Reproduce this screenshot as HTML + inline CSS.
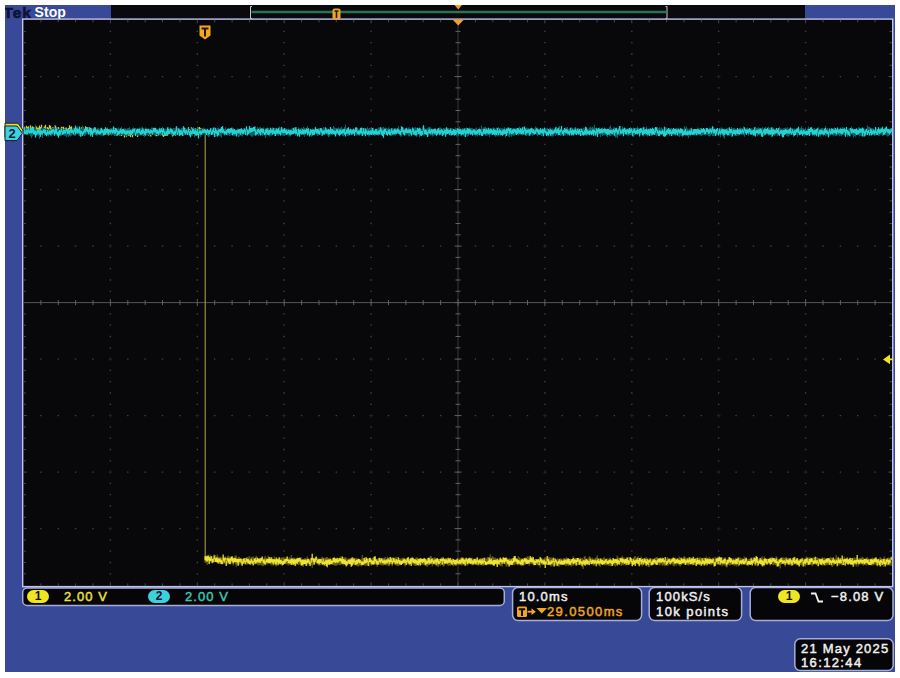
<!DOCTYPE html>
<html><head><meta charset="utf-8"><title>Tek Stop</title>
<style>
html,body{margin:0;padding:0;background:#fff;}
body{width:900px;height:678px;position:relative;overflow:hidden;font-family:"Liberation Sans",sans-serif;font-weight:bold;}
#scr{position:absolute;left:5px;top:5px;width:890px;height:667px;background:#384a97;}
.abs{position:absolute;}
#topbar{left:111px;top:5px;width:694px;height:14px;background:#0a0a0e;}
#plot{left:22px;top:19px;width:870px;height:567px;background:#09090c;border:1px solid #b6b9e2;box-sizing:content-box;}
.box{position:absolute;background:#060608;border:1px solid #aab0de;border-radius:6px;box-sizing:border-box;}
.t{font-weight:normal;-webkit-text-stroke:0.45px currentColor;position:absolute;white-space:nowrap;font-size:13px;line-height:13px;letter-spacing:1px;color:#f0f0f0;}
.badge{position:absolute;border-radius:7px;height:13px;width:22px;font-size:12px;line-height:13px;text-align:center;color:#101018;letter-spacing:0;}
svg{position:absolute;left:0;top:0;}
</style></head><body>
<div id="scr"></div>
<div class="abs" id="topbar"></div>

<div class="abs" style="left:5px;top:5px;width:40px;height:15px;overflow:hidden;"><div class="t" style="left:-1.5px;top:-0.5px;font-size:15.5px;line-height:15.5px;letter-spacing:0.9px;color:#0e1236;font-weight:bold;-webkit-text-stroke:0.6px #0e1236;">Tek</div></div>
<div class="t" style="left:34.5px;top:4.5px;font-size:14px;line-height:14px;letter-spacing:0.1px;color:#fff;font-weight:bold;-webkit-text-stroke:0;">Stop</div>

<!-- bottom readout boxes -->
<svg width="900" height="678" viewBox="0 0 900 678">
<rect x="22.7" y="588.0" width="481.6" height="17.4" rx="4.5" fill="#060608" stroke="#a6add8" stroke-width="1.5"/>
<rect x="512.6" y="587.4" width="129.0" height="33.2" rx="5.5" fill="#060608" stroke="#a6add8" stroke-width="1.5"/>
<rect x="649.2" y="587.4" width="92.4" height="33.2" rx="5.5" fill="#060608" stroke="#a6add8" stroke-width="1.5"/>
<rect x="750.2" y="587.4" width="142.8" height="33.2" rx="5.5" fill="#060608" stroke="#a6add8" stroke-width="1.5"/>
<rect x="794.8" y="638.8" width="98.4" height="31.8" rx="5.5" fill="#060608" stroke="#a6add8" stroke-width="1.5"/>
</svg>
<div class="badge" style="left:27px;top:590px;background:#f0e524;">1</div>
<div class="t" style="left:64px;top:590px;color:#ebe23c;letter-spacing:1.08px;">2.00 V</div>
<div class="badge" style="left:148px;top:590px;background:#3fd0de;">2</div>
<div class="t" style="left:185px;top:590px;color:#3ec4b4;letter-spacing:1.08px;">2.00 V</div>

<div class="t" style="left:519px;top:590px;letter-spacing:1.15px;">10.0ms</div>
<div class="t" style="left:547px;top:605px;color:#f0a628;letter-spacing:1.38px;">29.0500ms</div>

<div class="t" style="left:656px;top:590px;letter-spacing:1.15px;">100kS/s</div>
<div class="t" style="left:656px;top:605px;letter-spacing:1.42px;">10k points</div>

<div class="badge" style="left:778px;top:590px;background:#f0e524;">1</div>
<div class="t" style="left:831px;top:590px;letter-spacing:1.17px;">−8.08 V</div>

<div class="t" style="left:801px;top:642px;letter-spacing:1.2px;">21 May 2025</div>
<div class="t" style="left:801px;top:656px;letter-spacing:1.36px;">16:12:44</div>

<svg width="900" height="678" viewBox="0 0 900 678">
<rect x="22.700" y="19.100" width="870" height="567.500" fill="#08080b" stroke="#c0c4ee" stroke-width="1.400"/>
<path d="M40.2 76.6h1.4M57.6 76.6h1.4M74.9 76.6h1.4M92.3 76.6h1.4M109.7 76.6h1.4M127.1 76.6h1.4M144.5 76.6h1.4M161.8 76.6h1.4M179.2 76.6h1.4M196.6 76.6h1.4M214 76.6h1.4M231.4 76.6h1.4M248.7 76.6h1.4M266.1 76.6h1.4M283.5 76.6h1.4M300.9 76.6h1.4M318.3 76.6h1.4M335.6 76.6h1.4M353 76.6h1.4M370.4 76.6h1.4M387.8 76.6h1.4M405.2 76.6h1.4M422.5 76.6h1.4M439.9 76.6h1.4M457.3 76.6h1.4M474.7 76.6h1.4M492.1 76.6h1.4M509.4 76.6h1.4M526.8 76.6h1.4M544.2 76.6h1.4M561.6 76.6h1.4M579 76.6h1.4M596.3 76.6h1.4M613.7 76.6h1.4M631.1 76.6h1.4M648.5 76.6h1.4M665.9 76.6h1.4M683.2 76.6h1.4M700.6 76.6h1.4M718 76.6h1.4M735.4 76.6h1.4M752.8 76.6h1.4M770.1 76.6h1.4M787.5 76.6h1.4M804.9 76.6h1.4M822.3 76.6h1.4M839.7 76.6h1.4M857 76.6h1.4M874.4 76.6h1.4M40.2 133.1h1.4M57.6 133.1h1.4M74.9 133.1h1.4M92.3 133.1h1.4M109.7 133.1h1.4M127.1 133.1h1.4M144.5 133.1h1.4M161.8 133.1h1.4M179.2 133.1h1.4M196.6 133.1h1.4M214 133.1h1.4M231.4 133.1h1.4M248.7 133.1h1.4M266.1 133.1h1.4M283.5 133.1h1.4M300.9 133.1h1.4M318.3 133.1h1.4M335.6 133.1h1.4M353 133.1h1.4M370.4 133.1h1.4M387.8 133.1h1.4M405.2 133.1h1.4M422.5 133.1h1.4M439.9 133.1h1.4M457.3 133.1h1.4M474.7 133.1h1.4M492.1 133.1h1.4M509.4 133.1h1.4M526.8 133.1h1.4M544.2 133.1h1.4M561.6 133.1h1.4M579 133.1h1.4M596.3 133.1h1.4M613.7 133.1h1.4M631.1 133.1h1.4M648.5 133.1h1.4M665.9 133.1h1.4M683.2 133.1h1.4M700.6 133.1h1.4M718 133.1h1.4M735.4 133.1h1.4M752.8 133.1h1.4M770.1 133.1h1.4M787.5 133.1h1.4M804.9 133.1h1.4M822.3 133.1h1.4M839.7 133.1h1.4M857 133.1h1.4M874.4 133.1h1.4M40.2 189.6h1.4M57.6 189.6h1.4M74.9 189.6h1.4M92.3 189.6h1.4M109.7 189.6h1.4M127.1 189.6h1.4M144.5 189.6h1.4M161.8 189.6h1.4M179.2 189.6h1.4M196.6 189.6h1.4M214 189.6h1.4M231.4 189.6h1.4M248.7 189.6h1.4M266.1 189.6h1.4M283.5 189.6h1.4M300.9 189.6h1.4M318.3 189.6h1.4M335.6 189.6h1.4M353 189.6h1.4M370.4 189.6h1.4M387.8 189.6h1.4M405.2 189.6h1.4M422.5 189.6h1.4M439.9 189.6h1.4M457.3 189.6h1.4M474.7 189.6h1.4M492.1 189.6h1.4M509.4 189.6h1.4M526.8 189.6h1.4M544.2 189.6h1.4M561.6 189.6h1.4M579 189.6h1.4M596.3 189.6h1.4M613.7 189.6h1.4M631.1 189.6h1.4M648.5 189.6h1.4M665.9 189.6h1.4M683.2 189.6h1.4M700.6 189.6h1.4M718 189.6h1.4M735.4 189.6h1.4M752.8 189.6h1.4M770.1 189.6h1.4M787.5 189.6h1.4M804.9 189.6h1.4M822.3 189.6h1.4M839.7 189.6h1.4M857 189.6h1.4M874.4 189.6h1.4M40.2 246.1h1.4M57.6 246.1h1.4M74.9 246.1h1.4M92.3 246.1h1.4M109.7 246.1h1.4M127.1 246.1h1.4M144.5 246.1h1.4M161.8 246.1h1.4M179.2 246.1h1.4M196.6 246.1h1.4M214 246.1h1.4M231.4 246.1h1.4M248.7 246.1h1.4M266.1 246.1h1.4M283.5 246.1h1.4M300.9 246.1h1.4M318.3 246.1h1.4M335.6 246.1h1.4M353 246.1h1.4M370.4 246.1h1.4M387.8 246.1h1.4M405.2 246.1h1.4M422.5 246.1h1.4M439.9 246.1h1.4M457.3 246.1h1.4M474.7 246.1h1.4M492.1 246.1h1.4M509.4 246.1h1.4M526.8 246.1h1.4M544.2 246.1h1.4M561.6 246.1h1.4M579 246.1h1.4M596.3 246.1h1.4M613.7 246.1h1.4M631.1 246.1h1.4M648.5 246.1h1.4M665.9 246.1h1.4M683.2 246.1h1.4M700.6 246.1h1.4M718 246.1h1.4M735.4 246.1h1.4M752.8 246.1h1.4M770.1 246.1h1.4M787.5 246.1h1.4M804.9 246.1h1.4M822.3 246.1h1.4M839.7 246.1h1.4M857 246.1h1.4M874.4 246.1h1.4M40.2 359.1h1.4M57.6 359.1h1.4M74.9 359.1h1.4M92.3 359.1h1.4M109.7 359.1h1.4M127.1 359.1h1.4M144.5 359.1h1.4M161.8 359.1h1.4M179.2 359.1h1.4M196.6 359.1h1.4M214 359.1h1.4M231.4 359.1h1.4M248.7 359.1h1.4M266.1 359.1h1.4M283.5 359.1h1.4M300.9 359.1h1.4M318.3 359.1h1.4M335.6 359.1h1.4M353 359.1h1.4M370.4 359.1h1.4M387.8 359.1h1.4M405.2 359.1h1.4M422.5 359.1h1.4M439.9 359.1h1.4M457.3 359.1h1.4M474.7 359.1h1.4M492.1 359.1h1.4M509.4 359.1h1.4M526.8 359.1h1.4M544.2 359.1h1.4M561.6 359.1h1.4M579 359.1h1.4M596.3 359.1h1.4M613.7 359.1h1.4M631.1 359.1h1.4M648.5 359.1h1.4M665.9 359.1h1.4M683.2 359.1h1.4M700.6 359.1h1.4M718 359.1h1.4M735.4 359.1h1.4M752.8 359.1h1.4M770.1 359.1h1.4M787.5 359.1h1.4M804.9 359.1h1.4M822.3 359.1h1.4M839.7 359.1h1.4M857 359.1h1.4M874.4 359.1h1.4M40.2 415.6h1.4M57.6 415.6h1.4M74.9 415.6h1.4M92.3 415.6h1.4M109.7 415.6h1.4M127.1 415.6h1.4M144.5 415.6h1.4M161.8 415.6h1.4M179.2 415.6h1.4M196.6 415.6h1.4M214 415.6h1.4M231.4 415.6h1.4M248.7 415.6h1.4M266.1 415.6h1.4M283.5 415.6h1.4M300.9 415.6h1.4M318.3 415.6h1.4M335.6 415.6h1.4M353 415.6h1.4M370.4 415.6h1.4M387.8 415.6h1.4M405.2 415.6h1.4M422.5 415.6h1.4M439.9 415.6h1.4M457.3 415.6h1.4M474.7 415.6h1.4M492.1 415.6h1.4M509.4 415.6h1.4M526.8 415.6h1.4M544.2 415.6h1.4M561.6 415.6h1.4M579 415.6h1.4M596.3 415.6h1.4M613.7 415.6h1.4M631.1 415.6h1.4M648.5 415.6h1.4M665.9 415.6h1.4M683.2 415.6h1.4M700.6 415.6h1.4M718 415.6h1.4M735.4 415.6h1.4M752.8 415.6h1.4M770.1 415.6h1.4M787.5 415.6h1.4M804.9 415.6h1.4M822.3 415.6h1.4M839.7 415.6h1.4M857 415.6h1.4M874.4 415.6h1.4M40.2 472.1h1.4M57.6 472.1h1.4M74.9 472.1h1.4M92.3 472.1h1.4M109.7 472.1h1.4M127.1 472.1h1.4M144.5 472.1h1.4M161.8 472.1h1.4M179.2 472.1h1.4M196.6 472.1h1.4M214 472.1h1.4M231.4 472.1h1.4M248.7 472.1h1.4M266.1 472.1h1.4M283.5 472.1h1.4M300.9 472.1h1.4M318.3 472.1h1.4M335.6 472.1h1.4M353 472.1h1.4M370.4 472.1h1.4M387.8 472.1h1.4M405.2 472.1h1.4M422.5 472.1h1.4M439.9 472.1h1.4M457.3 472.1h1.4M474.7 472.1h1.4M492.1 472.1h1.4M509.4 472.1h1.4M526.8 472.1h1.4M544.2 472.1h1.4M561.6 472.1h1.4M579 472.1h1.4M596.3 472.1h1.4M613.7 472.1h1.4M631.1 472.1h1.4M648.5 472.1h1.4M665.9 472.1h1.4M683.2 472.1h1.4M700.6 472.1h1.4M718 472.1h1.4M735.4 472.1h1.4M752.8 472.1h1.4M770.1 472.1h1.4M787.5 472.1h1.4M804.9 472.1h1.4M822.3 472.1h1.4M839.7 472.1h1.4M857 472.1h1.4M874.4 472.1h1.4M40.2 528.6h1.4M57.6 528.6h1.4M74.9 528.6h1.4M92.3 528.6h1.4M109.7 528.6h1.4M127.1 528.6h1.4M144.5 528.6h1.4M161.8 528.6h1.4M179.2 528.6h1.4M196.6 528.6h1.4M214 528.6h1.4M231.4 528.6h1.4M248.7 528.6h1.4M266.1 528.6h1.4M283.5 528.6h1.4M300.9 528.6h1.4M318.3 528.6h1.4M335.6 528.6h1.4M353 528.6h1.4M370.4 528.6h1.4M387.8 528.6h1.4M405.2 528.6h1.4M422.5 528.6h1.4M439.9 528.6h1.4M457.3 528.6h1.4M474.7 528.6h1.4M492.1 528.6h1.4M509.4 528.6h1.4M526.8 528.6h1.4M544.2 528.6h1.4M561.6 528.6h1.4M579 528.6h1.4M596.3 528.6h1.4M613.7 528.6h1.4M631.1 528.6h1.4M648.5 528.6h1.4M665.9 528.6h1.4M683.2 528.6h1.4M700.6 528.6h1.4M718 528.6h1.4M735.4 528.6h1.4M752.8 528.6h1.4M770.1 528.6h1.4M787.5 528.6h1.4M804.9 528.6h1.4M822.3 528.6h1.4M839.7 528.6h1.4M857 528.6h1.4M874.4 528.6h1.4M109.7 31.4h1.4M109.7 42.7h1.4M109.7 54h1.4M109.7 65.3h1.4M109.7 76.6h1.4M109.7 87.9h1.4M109.7 99.2h1.4M109.7 110.5h1.4M109.7 121.8h1.4M109.7 133.1h1.4M109.7 144.4h1.4M109.7 155.7h1.4M109.7 167h1.4M109.7 178.3h1.4M109.7 189.6h1.4M109.7 200.9h1.4M109.7 212.2h1.4M109.7 223.5h1.4M109.7 234.8h1.4M109.7 246.1h1.4M109.7 257.4h1.4M109.7 268.7h1.4M109.7 280h1.4M109.7 291.3h1.4M109.7 302.6h1.4M109.7 313.9h1.4M109.7 325.2h1.4M109.7 336.5h1.4M109.7 347.8h1.4M109.7 359.1h1.4M109.7 370.4h1.4M109.7 381.7h1.4M109.7 393h1.4M109.7 404.3h1.4M109.7 415.6h1.4M109.7 426.9h1.4M109.7 438.2h1.4M109.7 449.5h1.4M109.7 460.8h1.4M109.7 472.1h1.4M109.7 483.4h1.4M109.7 494.7h1.4M109.7 506h1.4M109.7 517.3h1.4M109.7 528.6h1.4M109.7 539.9h1.4M109.7 551.2h1.4M109.7 562.5h1.4M109.7 573.8h1.4M196.6 31.4h1.4M196.6 42.7h1.4M196.6 54h1.4M196.6 65.3h1.4M196.6 76.6h1.4M196.6 87.9h1.4M196.6 99.2h1.4M196.6 110.5h1.4M196.6 121.8h1.4M196.6 133.1h1.4M196.6 144.4h1.4M196.6 155.7h1.4M196.6 167h1.4M196.6 178.3h1.4M196.6 189.6h1.4M196.6 200.9h1.4M196.6 212.2h1.4M196.6 223.5h1.4M196.6 234.8h1.4M196.6 246.1h1.4M196.6 257.4h1.4M196.6 268.7h1.4M196.6 280h1.4M196.6 291.3h1.4M196.6 302.6h1.4M196.6 313.9h1.4M196.6 325.2h1.4M196.6 336.5h1.4M196.6 347.8h1.4M196.6 359.1h1.4M196.6 370.4h1.4M196.6 381.7h1.4M196.6 393h1.4M196.6 404.3h1.4M196.6 415.6h1.4M196.6 426.9h1.4M196.6 438.2h1.4M196.6 449.5h1.4M196.6 460.8h1.4M196.6 472.1h1.4M196.6 483.4h1.4M196.6 494.7h1.4M196.6 506h1.4M196.6 517.3h1.4M196.6 528.6h1.4M196.6 539.9h1.4M196.6 551.2h1.4M196.6 562.5h1.4M196.6 573.8h1.4M283.5 31.4h1.4M283.5 42.7h1.4M283.5 54h1.4M283.5 65.3h1.4M283.5 76.6h1.4M283.5 87.9h1.4M283.5 99.2h1.4M283.5 110.5h1.4M283.5 121.8h1.4M283.5 133.1h1.4M283.5 144.4h1.4M283.5 155.7h1.4M283.5 167h1.4M283.5 178.3h1.4M283.5 189.6h1.4M283.5 200.9h1.4M283.5 212.2h1.4M283.5 223.5h1.4M283.5 234.8h1.4M283.5 246.1h1.4M283.5 257.4h1.4M283.5 268.7h1.4M283.5 280h1.4M283.5 291.3h1.4M283.5 302.6h1.4M283.5 313.9h1.4M283.5 325.2h1.4M283.5 336.5h1.4M283.5 347.8h1.4M283.5 359.1h1.4M283.5 370.4h1.4M283.5 381.7h1.4M283.5 393h1.4M283.5 404.3h1.4M283.5 415.6h1.4M283.5 426.9h1.4M283.5 438.2h1.4M283.5 449.5h1.4M283.5 460.8h1.4M283.5 472.1h1.4M283.5 483.4h1.4M283.5 494.7h1.4M283.5 506h1.4M283.5 517.3h1.4M283.5 528.6h1.4M283.5 539.9h1.4M283.5 551.2h1.4M283.5 562.5h1.4M283.5 573.8h1.4M370.4 31.4h1.4M370.4 42.7h1.4M370.4 54h1.4M370.4 65.3h1.4M370.4 76.6h1.4M370.4 87.9h1.4M370.4 99.2h1.4M370.4 110.5h1.4M370.4 121.8h1.4M370.4 133.1h1.4M370.4 144.4h1.4M370.4 155.7h1.4M370.4 167h1.4M370.4 178.3h1.4M370.4 189.6h1.4M370.4 200.9h1.4M370.4 212.2h1.4M370.4 223.5h1.4M370.4 234.8h1.4M370.4 246.1h1.4M370.4 257.4h1.4M370.4 268.7h1.4M370.4 280h1.4M370.4 291.3h1.4M370.4 302.6h1.4M370.4 313.9h1.4M370.4 325.2h1.4M370.4 336.5h1.4M370.4 347.8h1.4M370.4 359.1h1.4M370.4 370.4h1.4M370.4 381.7h1.4M370.4 393h1.4M370.4 404.3h1.4M370.4 415.6h1.4M370.4 426.9h1.4M370.4 438.2h1.4M370.4 449.5h1.4M370.4 460.8h1.4M370.4 472.1h1.4M370.4 483.4h1.4M370.4 494.7h1.4M370.4 506h1.4M370.4 517.3h1.4M370.4 528.6h1.4M370.4 539.9h1.4M370.4 551.2h1.4M370.4 562.5h1.4M370.4 573.8h1.4M544.2 31.4h1.4M544.2 42.7h1.4M544.2 54h1.4M544.2 65.3h1.4M544.2 76.6h1.4M544.2 87.9h1.4M544.2 99.2h1.4M544.2 110.5h1.4M544.2 121.8h1.4M544.2 133.1h1.4M544.2 144.4h1.4M544.2 155.7h1.4M544.2 167h1.4M544.2 178.3h1.4M544.2 189.6h1.4M544.2 200.9h1.4M544.2 212.2h1.4M544.2 223.5h1.4M544.2 234.8h1.4M544.2 246.1h1.4M544.2 257.4h1.4M544.2 268.7h1.4M544.2 280h1.4M544.2 291.3h1.4M544.2 302.6h1.4M544.2 313.9h1.4M544.2 325.2h1.4M544.2 336.5h1.4M544.2 347.8h1.4M544.2 359.1h1.4M544.2 370.4h1.4M544.2 381.7h1.4M544.2 393h1.4M544.2 404.3h1.4M544.2 415.6h1.4M544.2 426.9h1.4M544.2 438.2h1.4M544.2 449.5h1.4M544.2 460.8h1.4M544.2 472.1h1.4M544.2 483.4h1.4M544.2 494.7h1.4M544.2 506h1.4M544.2 517.3h1.4M544.2 528.6h1.4M544.2 539.9h1.4M544.2 551.2h1.4M544.2 562.5h1.4M544.2 573.8h1.4M631.1 31.4h1.4M631.1 42.7h1.4M631.1 54h1.4M631.1 65.3h1.4M631.1 76.6h1.4M631.1 87.9h1.4M631.1 99.2h1.4M631.1 110.5h1.4M631.1 121.8h1.4M631.1 133.1h1.4M631.1 144.4h1.4M631.1 155.7h1.4M631.1 167h1.4M631.1 178.3h1.4M631.1 189.6h1.4M631.1 200.9h1.4M631.1 212.2h1.4M631.1 223.5h1.4M631.1 234.8h1.4M631.1 246.1h1.4M631.1 257.4h1.4M631.1 268.7h1.4M631.1 280h1.4M631.1 291.3h1.4M631.1 302.6h1.4M631.1 313.9h1.4M631.1 325.2h1.4M631.1 336.5h1.4M631.1 347.8h1.4M631.1 359.1h1.4M631.1 370.4h1.4M631.1 381.7h1.4M631.1 393h1.4M631.1 404.3h1.4M631.1 415.6h1.4M631.1 426.9h1.4M631.1 438.2h1.4M631.1 449.5h1.4M631.1 460.8h1.4M631.1 472.1h1.4M631.1 483.4h1.4M631.1 494.7h1.4M631.1 506h1.4M631.1 517.3h1.4M631.1 528.6h1.4M631.1 539.9h1.4M631.1 551.2h1.4M631.1 562.5h1.4M631.1 573.8h1.4M718 31.4h1.4M718 42.7h1.4M718 54h1.4M718 65.3h1.4M718 76.6h1.4M718 87.9h1.4M718 99.2h1.4M718 110.5h1.4M718 121.8h1.4M718 133.1h1.4M718 144.4h1.4M718 155.7h1.4M718 167h1.4M718 178.3h1.4M718 189.6h1.4M718 200.9h1.4M718 212.2h1.4M718 223.5h1.4M718 234.8h1.4M718 246.1h1.4M718 257.4h1.4M718 268.7h1.4M718 280h1.4M718 291.3h1.4M718 302.6h1.4M718 313.9h1.4M718 325.2h1.4M718 336.5h1.4M718 347.8h1.4M718 359.1h1.4M718 370.4h1.4M718 381.7h1.4M718 393h1.4M718 404.3h1.4M718 415.6h1.4M718 426.9h1.4M718 438.2h1.4M718 449.5h1.4M718 460.8h1.4M718 472.1h1.4M718 483.4h1.4M718 494.7h1.4M718 506h1.4M718 517.3h1.4M718 528.6h1.4M718 539.9h1.4M718 551.2h1.4M718 562.5h1.4M718 573.8h1.4M804.9 31.4h1.4M804.9 42.7h1.4M804.9 54h1.4M804.9 65.3h1.4M804.9 76.6h1.4M804.9 87.9h1.4M804.9 99.2h1.4M804.9 110.5h1.4M804.9 121.8h1.4M804.9 133.1h1.4M804.9 144.4h1.4M804.9 155.7h1.4M804.9 167h1.4M804.9 178.3h1.4M804.9 189.6h1.4M804.9 200.9h1.4M804.9 212.2h1.4M804.9 223.5h1.4M804.9 234.8h1.4M804.9 246.1h1.4M804.9 257.4h1.4M804.9 268.7h1.4M804.9 280h1.4M804.9 291.3h1.4M804.9 302.6h1.4M804.9 313.9h1.4M804.9 325.2h1.4M804.9 336.5h1.4M804.9 347.8h1.4M804.9 359.1h1.4M804.9 370.4h1.4M804.9 381.7h1.4M804.9 393h1.4M804.9 404.3h1.4M804.9 415.6h1.4M804.9 426.9h1.4M804.9 438.2h1.4M804.9 449.5h1.4M804.9 460.8h1.4M804.9 472.1h1.4M804.9 483.4h1.4M804.9 494.7h1.4M804.9 506h1.4M804.9 517.3h1.4M804.9 528.6h1.4M804.9 539.9h1.4M804.9 551.2h1.4M804.9 562.5h1.4M804.9 573.8h1.4" stroke="#42424a" stroke-width="1.3" fill="none"/>
<path d="M108.4 76.6h4M110.4 74.6v4M108.4 133.1h4M110.4 131.1v4M108.4 189.6h4M110.4 187.6v4M108.4 246.1h4M110.4 244.1v4M108.4 359.1h4M110.4 357.1v4M108.4 415.6h4M110.4 413.6v4M108.4 472.1h4M110.4 470.1v4M108.4 528.6h4M110.4 526.6v4M195.3 76.6h4M197.3 74.6v4M195.3 133.1h4M197.3 131.1v4M195.3 189.6h4M197.3 187.6v4M195.3 246.1h4M197.3 244.1v4M195.3 359.1h4M197.3 357.1v4M195.3 415.6h4M197.3 413.6v4M195.3 472.1h4M197.3 470.1v4M195.3 528.6h4M197.3 526.6v4M282.2 76.6h4M284.2 74.6v4M282.2 133.1h4M284.2 131.1v4M282.2 189.6h4M284.2 187.6v4M282.2 246.1h4M284.2 244.1v4M282.2 359.1h4M284.2 357.1v4M282.2 415.6h4M284.2 413.6v4M282.2 472.1h4M284.2 470.1v4M282.2 528.6h4M284.2 526.6v4M369.1 76.6h4M371.1 74.6v4M369.1 133.1h4M371.1 131.1v4M369.1 189.6h4M371.1 187.6v4M369.1 246.1h4M371.1 244.1v4M369.1 359.1h4M371.1 357.1v4M369.1 415.6h4M371.1 413.6v4M369.1 472.1h4M371.1 470.1v4M369.1 528.6h4M371.1 526.6v4M542.9 76.6h4M544.9 74.6v4M542.9 133.1h4M544.9 131.1v4M542.9 189.6h4M544.9 187.6v4M542.9 246.1h4M544.9 244.1v4M542.9 359.1h4M544.9 357.1v4M542.9 415.6h4M544.9 413.6v4M542.9 472.1h4M544.9 470.1v4M542.9 528.6h4M544.9 526.6v4M629.8 76.6h4M631.8 74.6v4M629.8 133.1h4M631.8 131.1v4M629.8 189.6h4M631.8 187.6v4M629.8 246.1h4M631.8 244.1v4M629.8 359.1h4M631.8 357.1v4M629.8 415.6h4M631.8 413.6v4M629.8 472.1h4M631.8 470.1v4M629.8 528.6h4M631.8 526.6v4M716.7 76.6h4M718.7 74.6v4M716.7 133.1h4M718.7 131.1v4M716.7 189.6h4M718.7 187.6v4M716.7 246.1h4M718.7 244.1v4M716.7 359.1h4M718.7 357.1v4M716.7 415.6h4M718.7 413.6v4M716.7 472.1h4M718.7 470.1v4M716.7 528.6h4M718.7 526.6v4M803.6 76.6h4M805.6 74.6v4M803.6 133.1h4M805.6 131.1v4M803.6 189.6h4M805.6 187.6v4M803.6 246.1h4M805.6 244.1v4M803.6 359.1h4M805.6 357.1v4M803.6 415.6h4M805.6 413.6v4M803.6 472.1h4M805.6 470.1v4M803.6 528.6h4M805.6 526.6v4" stroke="#202028" stroke-width="1" fill="none"/>
<path d="M23.4 302.6H892" stroke="#545458" stroke-width="1" fill="none"/>
<path d="M458 19.8V585.9" stroke="#38383e" stroke-width="1" fill="none"/>
<path d="M40.9 300.1v5.0M58.3 300.1v5.0M75.6 300.1v5.0M93 300.1v5.0M110.4 299.1v7.0M127.8 300.1v5.0M145.2 300.1v5.0M162.5 300.1v5.0M179.9 300.1v5.0M197.3 299.1v7.0M214.7 300.1v5.0M232.1 300.1v5.0M249.4 300.1v5.0M266.8 300.1v5.0M284.2 299.1v7.0M301.6 300.1v5.0M319 300.1v5.0M336.3 300.1v5.0M353.7 300.1v5.0M371.1 299.1v7.0M388.5 300.1v5.0M405.9 300.1v5.0M423.2 300.1v5.0M440.6 300.1v5.0M458 299.1v7.0M475.4 300.1v5.0M492.8 300.1v5.0M510.1 300.1v5.0M527.5 300.1v5.0M544.9 299.1v7.0M562.3 300.1v5.0M579.7 300.1v5.0M597 300.1v5.0M614.4 300.1v5.0M631.8 299.1v7.0M649.2 300.1v5.0M666.6 300.1v5.0M683.9 300.1v5.0M701.3 300.1v5.0M718.7 299.1v7.0M736.1 300.1v5.0M753.5 300.1v5.0M770.8 300.1v5.0M788.2 300.1v5.0M805.6 299.1v7.0M823 300.1v5.0M840.4 300.1v5.0M857.7 300.1v5.0M875.1 300.1v5.0M455.5 31.4h5.0M455.5 42.7h5.0M455.5 54h5.0M455.5 65.3h5.0M454.5 76.6h7.0M455.5 87.9h5.0M455.5 99.2h5.0M455.5 110.5h5.0M455.5 121.8h5.0M454.5 133.1h7.0M455.5 144.4h5.0M455.5 155.7h5.0M455.5 167h5.0M455.5 178.3h5.0M454.5 189.6h7.0M455.5 200.9h5.0M455.5 212.2h5.0M455.5 223.5h5.0M455.5 234.8h5.0M454.5 246.1h7.0M455.5 257.4h5.0M455.5 268.7h5.0M455.5 280h5.0M455.5 291.3h5.0M454.5 302.6h7.0M455.5 313.9h5.0M455.5 325.2h5.0M455.5 336.5h5.0M455.5 347.8h5.0M454.5 359.1h7.0M455.5 370.4h5.0M455.5 381.7h5.0M455.5 393h5.0M455.5 404.3h5.0M454.5 415.6h7.0M455.5 426.9h5.0M455.5 438.2h5.0M455.5 449.5h5.0M455.5 460.8h5.0M454.5 472.1h7.0M455.5 483.4h5.0M455.5 494.7h5.0M455.5 506h5.0M455.5 517.3h5.0M454.5 528.6h7.0M455.5 539.9h5.0M455.5 551.2h5.0M455.5 562.5h5.0M455.5 573.8h5.0" stroke="#626266" stroke-width="1" fill="none"/>
<path d="M40.9 19.8v2.5M40.9 585.9v-2.5M58.3 19.8v2.5M58.3 585.9v-2.5M75.6 19.8v2.5M75.6 585.9v-2.5M93 19.8v2.5M93 585.9v-2.5M110.4 19.8v3.5M110.4 585.9v-3.5M127.8 19.8v2.5M127.8 585.9v-2.5M145.2 19.8v2.5M145.2 585.9v-2.5M162.5 19.8v2.5M162.5 585.9v-2.5M179.9 19.8v2.5M179.9 585.9v-2.5M197.3 19.8v3.5M197.3 585.9v-3.5M214.7 19.8v2.5M214.7 585.9v-2.5M232.1 19.8v2.5M232.1 585.9v-2.5M249.4 19.8v2.5M249.4 585.9v-2.5M266.8 19.8v2.5M266.8 585.9v-2.5M284.2 19.8v3.5M284.2 585.9v-3.5M301.6 19.8v2.5M301.6 585.9v-2.5M319 19.8v2.5M319 585.9v-2.5M336.3 19.8v2.5M336.3 585.9v-2.5M353.7 19.8v2.5M353.7 585.9v-2.5M371.1 19.8v3.5M371.1 585.9v-3.5M388.5 19.8v2.5M388.5 585.9v-2.5M405.9 19.8v2.5M405.9 585.9v-2.5M423.2 19.8v2.5M423.2 585.9v-2.5M440.6 19.8v2.5M440.6 585.9v-2.5M458 19.8v3.5M458 585.9v-3.5M475.4 19.8v2.5M475.4 585.9v-2.5M492.8 19.8v2.5M492.8 585.9v-2.5M510.1 19.8v2.5M510.1 585.9v-2.5M527.5 19.8v2.5M527.5 585.9v-2.5M544.9 19.8v3.5M544.9 585.9v-3.5M562.3 19.8v2.5M562.3 585.9v-2.5M579.7 19.8v2.5M579.7 585.9v-2.5M597 19.8v2.5M597 585.9v-2.5M614.4 19.8v2.5M614.4 585.9v-2.5M631.8 19.8v3.5M631.8 585.9v-3.5M649.2 19.8v2.5M649.2 585.9v-2.5M666.6 19.8v2.5M666.6 585.9v-2.5M683.9 19.8v2.5M683.9 585.9v-2.5M701.3 19.8v2.5M701.3 585.9v-2.5M718.7 19.8v3.5M718.7 585.9v-3.5M736.1 19.8v2.5M736.1 585.9v-2.5M753.5 19.8v2.5M753.5 585.9v-2.5M770.8 19.8v2.5M770.8 585.9v-2.5M788.2 19.8v2.5M788.2 585.9v-2.5M805.6 19.8v3.5M805.6 585.9v-3.5M823 19.8v2.5M823 585.9v-2.5M840.4 19.8v2.5M840.4 585.9v-2.5M857.7 19.8v2.5M857.7 585.9v-2.5M875.1 19.8v2.5M875.1 585.9v-2.5M23.4 31.4h2.5M892 31.4h-2.5M23.4 42.7h2.5M892 42.7h-2.5M23.4 54h2.5M892 54h-2.5M23.4 65.3h2.5M892 65.3h-2.5M23.4 76.6h3.5M892 76.6h-3.5M23.4 87.9h2.5M892 87.9h-2.5M23.4 99.2h2.5M892 99.2h-2.5M23.4 110.5h2.5M892 110.5h-2.5M23.4 121.8h2.5M892 121.8h-2.5M23.4 133.1h3.5M892 133.1h-3.5M23.4 144.4h2.5M892 144.4h-2.5M23.4 155.7h2.5M892 155.7h-2.5M23.4 167h2.5M892 167h-2.5M23.4 178.3h2.5M892 178.3h-2.5M23.4 189.6h3.5M892 189.6h-3.5M23.4 200.9h2.5M892 200.9h-2.5M23.4 212.2h2.5M892 212.2h-2.5M23.4 223.5h2.5M892 223.5h-2.5M23.4 234.8h2.5M892 234.8h-2.5M23.4 246.1h3.5M892 246.1h-3.5M23.4 257.4h2.5M892 257.4h-2.5M23.4 268.7h2.5M892 268.7h-2.5M23.4 280h2.5M892 280h-2.5M23.4 291.3h2.5M892 291.3h-2.5M23.4 302.6h3.5M892 302.6h-3.5M23.4 313.9h2.5M892 313.9h-2.5M23.4 325.2h2.5M892 325.2h-2.5M23.4 336.5h2.5M892 336.5h-2.5M23.4 347.8h2.5M892 347.8h-2.5M23.4 359.1h3.5M892 359.1h-3.5M23.4 370.4h2.5M892 370.4h-2.5M23.4 381.7h2.5M892 381.7h-2.5M23.4 393h2.5M892 393h-2.5M23.4 404.3h2.5M892 404.3h-2.5M23.4 415.6h3.5M892 415.6h-3.5M23.4 426.9h2.5M892 426.9h-2.5M23.4 438.2h2.5M892 438.2h-2.5M23.4 449.5h2.5M892 449.5h-2.5M23.4 460.8h2.5M892 460.8h-2.5M23.4 472.1h3.5M892 472.1h-3.5M23.4 483.4h2.5M892 483.4h-2.5M23.4 494.7h2.5M892 494.7h-2.5M23.4 506h2.5M892 506h-2.5M23.4 517.3h2.5M892 517.3h-2.5M23.4 528.6h3.5M892 528.6h-3.5M23.4 539.9h2.5M892 539.9h-2.5M23.4 551.2h2.5M892 551.2h-2.5M23.4 562.5h2.5M892 562.5h-2.5M23.4 573.8h2.5M892 573.8h-2.5" stroke="#484856" stroke-width="1" fill="none"/>
<path d="M24.5 126.8V131.1M25.5 128.2V131.7M26.5 125.7V129.7M27.5 126.9V130.9M28.5 126.3V132.1M29.5 126.9V131.5M30.5 125.3V130.9M31.5 127.6V132.7M32.5 126.3V130.3M33.5 127V131.3M34.5 128.8V132.3M35.5 127.9V132.2M36.5 126.6V133M37.5 127.7V130.9M38.5 127.5V130.4M39.5 125.6V131.4M40.5 127V130M41.5 124.7V130.2M42.5 128.8V132.5M43.5 127.4V131.5M44.5 126.5V129.3M45.5 124.7V129.4M46.5 128.5V131.4M47.5 127V130.6M48.5 127.7V131.3M49.5 124.9V128.4M50.5 125.7V130.8M51.5 128.2V131.6M52.5 127.2V131.4M53.5 127.4V132.1M54.5 127.5V131.7M55.5 125.5V129.5M56.5 127.4V130.7M57.5 129.1V132.3M58.5 127.1V131.2M59.5 128.2V131M60.5 128.8V133.2M61.5 126.8V131M62.5 127.1V131.1M63.5 126.8V131.5M64.5 128.6V132.3M65.5 127.8V131.9M66.5 128.9V132.2M67.5 128.7V132.2M68.5 128.1V131.6M69.5 125.3V129.7M70.5 127.1V131.6M71.5 126.2V131.8M72.5 129V132.3M73.5 128.7V132.4M74.5 128.4V132.3M75.5 126.8V131.4M76.5 127.4V131.2M77.5 129.2V132.9M78.5 128.5V132.2M79.5 128.2V133.2M80.5 128.5V131.7M81.5 127.2V131.6M82.5 128.7V134.6M83.5 130.4V133.2M84.5 129.2V133.8M85.5 126.2V130.5M86.5 129.6V133.3M87.5 129.2V132.6M88.5 127.6V131.7M89.5 129.8V132.8M90.5 127.8V131.8M91.5 129.9V133.6M92.5 129.9V132.8M93.5 127.9V131.1M94.5 128.8V131.9M95.5 131.2V134.8M96.5 129.7V133.7M97.5 129.9V133.5M98.5 131.3V134.7M99.5 129V132.8M100.5 128.4V132.7M101.5 129.9V133.9M102.5 130.1V133.2M103.5 130.7V134.2M104.5 128.9V132.4M105.5 130.2V135.1M106.5 129.5V132.8M107.5 131.6V134.7M108.5 131.4V135.4M109.5 130.8V134.9M110.5 129V132.9M111.5 132.2V135.2M112.5 129.9V134.1M113.5 130.3V135.1M114.5 131.5V135M115.5 132.1V136M116.5 132.3V135.5M117.5 130.4V135.1M118.5 130.1V134.5M119.5 132.1V135.5M120.5 131.2V135.2M121.5 132.3V136M122.5 130.7V134.8M123.5 131.9V135.3M124.5 133.1V137.5M125.5 129.6V133.7M126.5 129.6V136.7M127.5 131.4V135.3M128.5 131.3V135.8M129.5 130.3V135.6M130.5 131.2V136.9M131.5 131.6V135.1M132.5 132V137.2M133.5 130V134.7M134.5 129.7V133.4M135.5 131.4V135.3M136.5 130.3V133.7M137.5 132.1V137M138.5 130.1V134.4M139.5 131V134.9M140.5 131.7V135.1M141.5 130.8V134.8M142.5 129.3V135.2M143.5 131.7V135.6M144.5 131.4V135.6M145.5 130.6V135.4M146.5 128.7V134.9M147.5 131V134M148.5 132.1V135.7M149.5 128.9V133.1M150.5 131.6V136.6M151.5 130V133.7M152.5 132V134.9M153.5 129.7V133.3M154.5 130.9V134.5M155.5 132.1V135.6M156.5 131.5V136.2M157.5 131.3V135.5M158.5 129.3V133.5M159.5 130.2V133.3M160.5 132V135.2M161.5 131.8V134.5M162.5 130.7V135.5M163.5 131.7V137M164.5 131.5V135.9M165.5 130.9V135.3M166.5 129.8V134.6M167.5 131.7V135.7M168.5 130V132.9M169.5 129.7V133.7M170.5 129.4V133M171.5 131.4V134.4M172.5 131.7V136.5M173.5 128.3V131.9M174.5 131.3V134.3M175.5 129.4V136.1M176.5 129.3V133M177.5 129.7V133.2M178.5 129.6V133.2M179.5 130.6V136M180.5 129.8V133M181.5 130.2V135M182.5 130.6V134.7M183.5 130V134.2M184.5 129.4V134.8M185.5 129V133.9M186.5 130.2V133.2M187.5 130.7V134.4M188.5 130.6V134M189.5 128.9V133.1M190.5 129.7V133.5M191.5 127.2V132.3M192.5 127.9V131.3M193.5 129.1V132.7M194.5 128.9V132.8M195.5 127.9V132.6M196.5 128.9V132.6M197.5 128.2V132.9M198.5 127.6V132.5M199.5 127.1V130.4M200.5 127.9V132.9M201.5 128.1V131.2M202.5 129V132M203.5 128.6V133.4M204.5 129V131.8" stroke="#d4c62c" stroke-width="1.25" fill="none"/>
<path d="M205.2 135V561.5" stroke="#a89a48" stroke-width="1.1" fill="none"/>
<path d="M205.2 556.4V562.9M206.2 555.6V562.2M207.2 555.6V565M208.2 554.8V561.5M209.2 556.3V563.3M210.2 554.7V562.2M211.2 555.9V561.8M212.2 556.5V563.6M213.2 557.3V563M214.2 554.6V562.5M215.2 555.1V561M216.2 556.7V562.3M217.2 554.6V562.2M218.2 556.6V563.1M219.2 557.2V564M220.2 556.8V563.9M221.2 557.4V564.3M222.2 557.2V563.2M223.2 557.3V563.8M224.2 557.4V564M225.2 556.2V562.4M226.2 558V563.8M227.2 556.4V564.6M228.2 555.6V563.6M229.2 556.5V564M230.2 557.4V563.4M231.2 556.7V563.5M232.2 557.4V563.3M233.2 557.9V565.6M234.2 557V562.9M235.2 555.6V564.2M236.2 555.6V566.7M237.2 558.2V564.8M238.2 557V564.7M239.2 556.8V564.8M240.2 557.9V563.6M241.2 558V565.3M242.2 559V566.2M243.2 558.3V563.9M244.2 558V563.3M245.2 558V564.8M246.2 557.5V564.5M247.2 557V564.7M248.2 557.6V564.3M249.2 556.1V563.5M250.2 558.6V564.9M251.2 556.7V564.5M252.2 557.2V564.1M253.2 556.4V564.5M254.2 558.9V564.5M255.2 557.3V564.3M256.2 555.7V562.7M257.2 557.9V564.5M258.2 559.3V565.4M259.2 558.8V565.1M260.2 558V564.4M261.2 557V565.6M262.2 558.5V565.4M263.2 558.5V566.2M264.2 557.5V565.1M265.2 555.8V565.5M266.2 557.7V564M267.2 558.1V564.4M268.2 555.7V563.2M269.2 558V563.5M270.2 557.2V563.4M271.2 558.5V565.4M272.2 557.4V564M273.2 559.4V565.9M274.2 556.3V564.3M275.2 559.4V565.3M276.2 558.9V566.6M277.2 558.1V565.4M278.2 558.6V565.4M279.2 558.4V563.9M280.2 558.2V564.8M281.2 557.7V563.8M282.2 557.2V564.5M283.2 557.5V564.9M284.2 557.3V563.4M285.2 558.3V564.1M286.2 557.1V564.4M287.2 558.6V564.3M288.2 558.7V565.4M289.2 557V564.5M290.2 558.5V564.4M291.2 555V565.3M292.2 558.9V565M293.2 557.8V564.9M294.2 557.4V564.4M295.2 558.2V566.2M296.2 558.2V565.2M297.2 557.4V562.9M298.2 557.9V565M299.2 558.3V564.6M300.2 557.4V564.6M301.2 557.3V563.7M302.2 559.3V566.1M303.2 559.8V567M304.2 558.3V564.7M305.2 558.3V563.8M306.2 558.7V565.3M307.2 556.5V565.6M308.2 557.9V563.8M309.2 559.1V566.1M310.2 559.1V565.9M311.2 557.8V564.8M312.2 557.4V567.8M313.2 559V565.1M314.2 558.6V564.9M315.2 557V563.2M316.2 556V563.3M317.2 557.5V563.8M318.2 558.6V565M319.2 558.2V565.5M320.2 559.1V565.3M321.2 557.8V563.7M322.2 556.7V564.6M323.2 557.4V564.3M324.2 557.9V564.7M325.2 557.9V564.3M326.2 556.9V564.3M327.2 557V564.7M328.2 557.9V565M329.2 558.6V564.3M330.2 557.4V564.1M331.2 558.9V564.6M332.2 558.5V564.7M333.2 557.9V565M334.2 557.5V565.3M335.2 558.1V565.8M336.2 559V565.4M337.2 558.4V565.5M338.2 558V563.9M339.2 558.6V565.1M340.2 556.5V565.3M341.2 558.9V564.4M342.2 556.9V564.2M343.2 557.3V565.5M344.2 557.4V564.2M345.2 557.3V564.7M346.2 557.6V565.1M347.2 559.2V566.1M348.2 558.5V564.4M349.2 558.3V564.2M350.2 558.6V564.8M351.2 558.5V565.2M352.2 558.7V564.4M353.2 557.6V564.8M354.2 558V565.3M355.2 558.2V564.4M356.2 557.8V565.8M357.2 559.7V565.8M358.2 558.4V566.7M359.2 559.4V565.7M360.2 559.4V565.3M361.2 558.7V566.6M362.2 554.9V564.3M363.2 558.4V564.1M364.2 557.4V565.3M365.2 557.3V565.7M366.2 559.1V565.7M367.2 558.6V564.6M368.2 559V565.2M369.2 557.9V566.3M370.2 558.4V564.5M371.2 560.2V565.8M372.2 558.1V564.9M373.2 557.5V563.6M374.2 558V564.7M375.2 558.7V564.5M376.2 558.7V565.1M377.2 558.9V567M378.2 558.2V564.9M379.2 557.4V564.8M380.2 557.8V564.8M381.2 559.4V565.4M382.2 558.1V564.9M383.2 558.3V565.7M384.2 557.8V565M385.2 557V564.6M386.2 559.4V565.5M387.2 556.8V564.5M388.2 558V565.9M389.2 558.4V566.2M390.2 556.8V564.4M391.2 557.5V564.3M392.2 557.4V566.2M393.2 557.3V563.8M394.2 557.7V563.6M395.2 557.5V564M396.2 557V565.6M397.2 559.3V565.8M398.2 559.1V565.9M399.2 558V565.5M400.2 558.3V564.7M401.2 558.7V564.4M402.2 557.8V564.1M403.2 557.7V563.5M404.2 558.7V564.8M405.2 559V566.4M406.2 558.8V564.8M407.2 558.9V564.4M408.2 558V563.9M409.2 559.1V565.4M410.2 558.5V563.9M411.2 557.7V563.9M412.2 556.8V564.6M413.2 557.7V564.5M414.2 559.3V565.6M415.2 558.3V565.7M416.2 557.6V566.1M417.2 557.2V563.9M418.2 558.9V565.1M419.2 558.3V564.5M420.2 559.7V565.4M421.2 558.4V564.9M422.2 558.9V564.6M423.2 558.2V564.7M424.2 557.8V564.2M425.2 559V565.1M426.2 558.7V566.1M427.2 558.4V566.9M428.2 558.3V565.2M429.2 557.5V564.4M430.2 556.2V564.3M431.2 555.9V563.3M432.2 558.3V566.6M433.2 557.9V563.7M434.2 557.6V563.8M435.2 557.5V565.3M436.2 558.6V565.7M437.2 559.1V566.3M438.2 559.1V567.1M439.2 558.7V564.3M440.2 559.6V566.1M441.2 557.8V564.5M442.2 557.3V565.1M443.2 559.6V566.6M444.2 558.6V566.1M445.2 558.3V564.2M446.2 558.1V564.1M447.2 558.3V564.8M448.2 558.2V565.8M449.2 558.5V565.3M450.2 557.8V565.9M451.2 558.4V564.8M452.2 558.5V564M453.2 558.8V566.6M454.2 559.9V565.3M455.2 559.4V565.8M456.2 559.3V566M457.2 558.4V564.5M458.2 558.3V564.4M459.2 558.8V564.9M460.2 558V564.9M461.2 557.3V565.4M462.2 557.7V565.2M463.2 557.6V563.8M464.2 558.4V565.4M465.2 557.9V564.6M466.2 559.3V564.8M467.2 559.1V565.7M468.2 558.1V565.1M469.2 558.3V564.1M470.2 557.7V564M471.2 557.7V564.8M472.2 557.7V565.4M473.2 559V565M474.2 558.6V564.6M475.2 558.9V565M476.2 558.1V564.9M477.2 557.4V565.1M478.2 559.2V566M479.2 558.7V565.1M480.2 558.2V565.2M481.2 558V564.7M482.2 558.3V565.5M483.2 558.1V565.9M484.2 558.2V565.1M485.2 557.7V564.7M486.2 558.8V565.6M487.2 557.2V563.7M488.2 557V564.3M489.2 559V564.6M490.2 554.2V564.8M491.2 559V564.7M492.2 556.3V562.8M493.2 556.7V563.8M494.2 558.1V566.1M495.2 557.4V563.4M496.2 558.9V565.1M497.2 559.4V565.5M498.2 558.8V565.1M499.2 558.9V565.1M500.2 558.6V566.1M501.2 558.3V565.4M502.2 558.8V566.5M503.2 557.1V563.4M504.2 557.6V564M505.2 557.4V564.5M506.2 559.7V566.7M507.2 558.2V565.2M508.2 558.9V566.4M509.2 558.1V565.1M510.2 558.9V565.3M511.2 558.6V564.9M512.2 558.3V565.2M513.2 558.7V564.7M514.2 558.6V565.3M515.2 558.7V564.5M516.2 558.1V564.1M517.2 558.4V565.2M518.2 556.2V565.2M519.2 557.2V563.6M520.2 558.6V565.3M521.2 558.2V565.9M522.2 559.1V565.7M523.2 559.4V566M524.2 558.7V565.3M525.2 557.3V564.8M526.2 557.8V564.1M527.2 556.5V564.2M528.2 556.3V563.9M529.2 557.9V565.8M530.2 558.4V564.1M531.2 558.4V564.2M532.2 556.5V564M533.2 558.6V565M534.2 559.3V565.7M535.2 559.1V565.1M536.2 558.9V564.8M537.2 559.3V565.1M538.2 559.5V565.4M539.2 558.7V565.6M540.2 558.7V567.6M541.2 558.2V564.4M542.2 558.6V565.1M543.2 559.1V564.8M544.2 558.2V564.4M545.2 557.1V564.1M546.2 558.3V564.7M547.2 559.1V565M548.2 557V564.9M549.2 556.8V564.2M550.2 557.9V563.6M551.2 557.3V566.5M552.2 558.9V565.1M553.2 557.7V566.4M554.2 558V565M555.2 558.9V565.6M556.2 559.2V565.5M557.2 558.6V564.9M558.2 559.5V566.4M559.2 558.8V566.4M560.2 558.3V564.5M561.2 558.6V565.2M562.2 559.4V565.1M563.2 558.5V564.6M564.2 558.1V564.6M565.2 558.7V565.4M566.2 557.3V566.2M567.2 557.9V564.8M568.2 558V566.1M569.2 559.1V565.2M570.2 558.7V565.3M571.2 559.2V566.7M572.2 559V565M573.2 556.3V565.9M574.2 558.2V564.5M575.2 558.1V564.5M576.2 558V565.6M577.2 559.1V565.3M578.2 558.1V564.4M579.2 558.6V564.6M580.2 557.5V565.1M581.2 558.5V565.8M582.2 558.1V567.3M583.2 559.2V569M584.2 556.8V565.1M585.2 555.9V563.7M586.2 558.6V564.7M587.2 558.6V564.4M588.2 558.2V565M589.2 556.3V565.5M590.2 556.7V563.9M591.2 558.6V564.6M592.2 557.7V564.3M593.2 558.7V565.4M594.2 559.2V565.6M595.2 557.8V564.3M596.2 557.6V563.7M597.2 555.2V564.5M598.2 558.5V564.8M599.2 559.6V566.1M600.2 558.7V566.7M601.2 558V563.9M602.2 558.9V564.6M603.2 558.1V564.7M604.2 557.1V565.2M605.2 559.2V565.3M606.2 560V565.4M607.2 558.4V565M608.2 559.2V565.6M609.2 558.3V565.7M610.2 557.6V565.6M611.2 559.2V566.2M612.2 558.8V566.1M613.2 558.4V564.2M614.2 559.9V565.6M615.2 558.8V566.6M616.2 558.7V564.2M617.2 555.6V563.9M618.2 557.4V563.5M619.2 557.7V564.1M620.2 557.7V564.2M621.2 557.3V566M622.2 555.7V565.1M623.2 557.3V565.3M624.2 557.8V563.3M625.2 558.7V565.6M626.2 557.7V565.2M627.2 557V565M628.2 557V563.9M629.2 558.2V564M630.2 558V563.9M631.2 558V564.1M632.2 559.6V566.7M633.2 558.2V564.3M634.2 556.8V564.1M635.2 556V563.2M636.2 558.5V564.4M637.2 557.1V564.2M638.2 556.2V564.5M639.2 559.2V565.5M640.2 558.7V565M641.2 556.6V564.1M642.2 558.8V566.5M643.2 558.8V564.8M644.2 558.2V564.3M645.2 558.1V564.9M646.2 557.1V563.9M647.2 558.8V564.9M648.2 558.7V566.9M649.2 558.5V567.2M650.2 559.9V565.5M651.2 558.6V565M652.2 558.4V565.8M653.2 559.1V565.1M654.2 558.3V564.6M655.2 557.7V564.3M656.2 557.2V564.8M657.2 557.3V562.8M658.2 558.4V564.3M659.2 558.7V565.4M660.2 557.5V564.9M661.2 557.9V564M662.2 557.3V565.9M663.2 558.8V565M664.2 559.2V565.8M665.2 559.4V565.7M666.2 558.8V564.9M667.2 557.1V565.8M668.2 558.1V565.4M669.2 558.1V564.1M670.2 558.5V565.2M671.2 558.5V564.2M672.2 558.4V564.4M673.2 557.2V565.8M674.2 559.2V566.6M675.2 557.5V564.5M676.2 559V565.7M677.2 558.5V563.8M678.2 558.4V564.6M679.2 556.5V565.5M680.2 557.8V566.4M681.2 557.9V563.3M682.2 558.2V564.3M683.2 557.2V563.3M684.2 555.9V563.7M685.2 557V564.8M686.2 558.5V564.9M687.2 557.7V564.8M688.2 558.8V565.7M689.2 557.3V564.6M690.2 556.9V564.7M691.2 557.8V564.6M692.2 558.2V565.2M693.2 559.3V565.3M694.2 558.4V565.1M695.2 558.5V565.2M696.2 558.6V564.6M697.2 558V564.2M698.2 557.7V564M699.2 557.4V564.4M700.2 557.2V564.5M701.2 558.6V565.4M702.2 558.3V565.3M703.2 557.7V564.2M704.2 557.7V564.9M705.2 558.2V564.5M706.2 556.5V565.7M707.2 558.3V565.5M708.2 557.9V564.1M709.2 556.7V563.6M710.2 558.5V564.6M711.2 558.7V565.2M712.2 557.8V564.2M713.2 557.8V564.5M714.2 558.6V564.2M715.2 556.9V564.2M716.2 558.2V564.4M717.2 556.9V564.4M718.2 557.3V564.7M719.2 558V564.9M720.2 558.5V565.4M721.2 558V564.6M722.2 557.4V566.3M723.2 558.5V564.8M724.2 557.8V565.7M725.2 557.3V564M726.2 559.4V567.2M727.2 559.3V567.2M728.2 557.8V564.6M729.2 559.5V565.2M730.2 559V565.6M731.2 558.1V564.7M732.2 558.7V564.9M733.2 558.2V564.3M734.2 559V566.1M735.2 558V564.9M736.2 557.7V566.6M737.2 558.1V564.5M738.2 559.2V566.4M739.2 557.5V566M740.2 557.5V564.1M741.2 558.4V565.2M742.2 558V565M743.2 559.1V564.7M744.2 556.5V564M745.2 557.8V564.5M746.2 557V565M747.2 559.3V565.8M748.2 559.2V566.2M749.2 558.8V565M750.2 558.7V564.9M751.2 557.5V563.9M752.2 558.4V564.6M753.2 557.5V562.8M754.2 558.4V564.4M755.2 558.2V565.9M756.2 557.5V565.1M757.2 558.7V566.5M758.2 558.4V565.3M759.2 558.4V563.7M760.2 558.1V564.2M761.2 557.4V564.1M762.2 556.5V563.8M763.2 558.8V566.8M764.2 556.6V564.9M765.2 558.5V564.5M766.2 558.7V565M767.2 558.5V564M768.2 558.8V564.1M769.2 557.7V564M770.2 557.7V565.6M771.2 557.2V564.1M772.2 556.7V564.4M773.2 559.3V565.3M774.2 557.8V564.6M775.2 558.1V564.9M776.2 556.3V565.3M777.2 557.5V564.2M778.2 559.3V565.4M779.2 558.7V566M780.2 558.4V568.5M781.2 557.9V564.4M782.2 557.6V564M783.2 557.6V564M784.2 557.9V564.9M785.2 557.5V566.4M786.2 557.1V564.2M787.2 558.1V564.2M788.2 557.7V564.3M789.2 558.3V565.2M790.2 558.3V565M791.2 559.3V566M792.2 558.2V564.8M793.2 558.8V565.3M794.2 558.2V564.6M795.2 556.7V564M796.2 558.4V565.6M797.2 558.6V565.3M798.2 559V565.3M799.2 559.9V565.7M800.2 559.2V564.7M801.2 557.9V565.5M802.2 557.4V564.8M803.2 558.7V564.9M804.2 558.6V566.3M805.2 559.1V566.4M806.2 556.4V565.1M807.2 557.1V563.4M808.2 557.6V564.8M809.2 557.4V563.4M810.2 557.3V564.8M811.2 557.7V564.7M812.2 559.6V566.3M813.2 557.2V564.5M814.2 557.9V564.3M815.2 556.9V563.9M816.2 557.6V563.8M817.2 557.1V564.5M818.2 558.2V566M819.2 558.4V564.8M820.2 558.4V564.7M821.2 559.3V565M822.2 557.2V565.7M823.2 558V564.6M824.2 557.6V565.7M825.2 558.4V565.7M826.2 559V564.9M827.2 558.7V565.3M828.2 558.2V564.1M829.2 557.9V563.6M830.2 557.3V563.5M831.2 557.6V564.8M832.2 558.1V567M833.2 558.7V565.6M834.2 558.8V565.3M835.2 558.5V564M836.2 555V564.1M837.2 558.3V564.9M838.2 556.7V564.7M839.2 558.2V565.6M840.2 557.8V564M841.2 557.9V565M842.2 558.5V565.5M843.2 558.6V564.9M844.2 556.8V565M845.2 558.4V565.5M846.2 558.3V563.7M847.2 557.1V564.3M848.2 558.9V565M849.2 557.8V563.4M850.2 557.5V565.3M851.2 557.8V565.1M852.2 559V565.1M853.2 558.8V564.2M854.2 557.3V565.4M855.2 558.3V564.3M856.2 558V566.5M857.2 557V564.3M858.2 558.9V566.6M859.2 557.9V564M860.2 557.8V564.4M861.2 558V564.2M862.2 556.7V563.2M863.2 557.4V565.7M864.2 559V564.6M865.2 559.1V564.9M866.2 558.8V565.4M867.2 556.9V564.1M868.2 558.4V564M869.2 559.1V564.8M870.2 558.5V565.1M871.2 558.8V565.4M872.2 557.4V565.3M873.2 558.4V565.5M874.2 558.1V564.4M875.2 557.1V564.7M876.2 558.4V564.6M877.2 559.4V566.4M878.2 559.1V565.5M879.2 558.4V564.6M880.2 556.9V564.6M881.2 558.1V565.7M882.2 559V564.6M883.2 558.5V566.7M884.2 556.4V565.6M885.2 558.3V564.7M886.2 559.4V564.8M887.2 558.5V565.5M888.2 557.5V564.8M889.2 558.1V565.7M890.2 557.9V564.9M891.2 557.9V566" stroke="#6a6218" stroke-width="1.1" fill="none"/>
<path d="M205.2 556.1V560.1M206.2 556.6V561M207.2 556.3V561.8M208.2 555.8V560.2M209.2 556.9V564M210.2 557.7V560.9M211.2 555.9V560.8M212.2 559.1V563M213.2 558.8V561.9M214.2 555.5V559.3M215.2 558.2V562M216.2 557.6V562.1M217.2 557.7V562.4M218.2 558.4V563.6M219.2 558.6V562M220.2 558.4V562.2M221.2 559.8V564M222.2 560.7V564.3M223.2 554.6V560.8M224.2 558.2V562.6M225.2 557.5V560.5M226.2 561V565.9M227.2 557.9V560.8M228.2 558.2V562.6M229.2 558.5V563.8M230.2 558.5V564.3M231.2 556.7V560.7M232.2 556.2V561.8M233.2 558.2V563.6M234.2 558.3V562.1M235.2 558.1V562.1M236.2 558.8V562.3M237.2 559V562.8M238.2 559V565.8M239.2 559V562.2M240.2 558.8V561.5M241.2 559.1V563M242.2 561.5V565.5M243.2 559.1V563.7M244.2 558.3V561.9M245.2 560.8V563.9M246.2 558.3V561.7M247.2 558.9V562.6M248.2 559.1V563.3M249.2 560.2V564.1M250.2 560.8V564.5M251.2 558.8V562.5M252.2 560.4V563.8M253.2 561.3V565.6M254.2 558.7V561.9M255.2 558.1V563.7M256.2 560V563.5M257.2 557.6V562.2M258.2 558.6V562.6M259.2 558.5V562.4M260.2 558.8V562.9M261.2 558V561.5M262.2 556.5V560.8M263.2 559.8V562.9M264.2 559.3V563.8M265.2 561.3V564.5M266.2 559.5V562.8M267.2 559V561.9M268.2 558.9V563.2M269.2 556.9V563.1M270.2 558.9V563.4M271.2 557.3V562.2M272.2 559V562.7M273.2 559.4V564.4M274.2 559.1V562.2M275.2 559.6V564.2M276.2 557.5V564.5M277.2 559.3V562.5M278.2 559.2V564.8M279.2 557.2V563.5M280.2 559.9V564.2M281.2 559.8V563.6M282.2 561.2V565.6M283.2 561.1V564.8M284.2 559.6V563.9M285.2 558.9V563.2M286.2 558.9V561.7M287.2 556.5V561M288.2 559.3V563M289.2 560.2V563.6M290.2 559.4V563.3M291.2 558.7V564.8M292.2 558.2V563.4M293.2 559.6V564.7M294.2 559V563.9M295.2 559.8V565.7M296.2 559V562.9M297.2 558.6V564.1M298.2 558V562.1M299.2 557.7V561.2M300.2 557.9V562.3M301.2 560.2V565.4M302.2 559.4V565.3M303.2 559.6V564.4M304.2 559.9V563.9M305.2 559.6V563.9M306.2 560.6V565.9M307.2 559.2V563.2M308.2 559V562.6M309.2 560.3V563.9M310.2 562.2V565.8M311.2 558V562.7M312.2 553.7V559.8M313.2 558.1V562M314.2 559.1V564.6M315.2 558.2V561.9M316.2 556.8V560.1M317.2 559.8V563.3M318.2 559.2V563.2M319.2 559.3V564.2M320.2 558.9V563.1M321.2 559.3V562.4M322.2 561.5V564.7M323.2 558.8V564M324.2 561.9V565.6M325.2 560.4V564M326.2 559.6V566.1M327.2 560.3V567.2M328.2 559.6V563.7M329.2 559.6V565.1M330.2 558.9V564.3M331.2 560.5V563.9M332.2 560.5V563.7M333.2 558V562.2M334.2 557.4V562.5M335.2 558.5V563M336.2 558.7V562.3M337.2 557.7V562.7M338.2 559.5V562.6M339.2 558.2V561.4M340.2 558.1V561.1M341.2 558.8V562.4M342.2 556.4V564M343.2 559V563.5M344.2 559.5V564M345.2 559.6V564.8M346.2 561V566.4M347.2 561.5V564.7M348.2 560.1V563.2M349.2 559.4V564M350.2 559.6V564.1M351.2 558.5V566.7M352.2 557.3V565.7M353.2 559.3V563.7M354.2 558.4V562.2M355.2 561.1V565M356.2 559.9V564.6M357.2 559.5V564.2M358.2 558.7V562.5M359.2 559V563.4M360.2 559.9V562.7M361.2 561.4V564.5M362.2 561.3V565.3M363.2 561.8V564.9M364.2 558.1V563.8M365.2 560.1V563.5M366.2 557.3V563.1M367.2 558.4V562.3M368.2 561.3V566M369.2 558.2V562.2M370.2 557.7V562M371.2 559.4V563.5M372.2 560.8V564.2M373.2 560.6V564.7M374.2 556.8V564.1M375.2 556.3V561.6M376.2 559.4V563.6M377.2 560.7V564.7M378.2 561.1V564.5M379.2 558.1V561.7M380.2 559.5V563.3M381.2 558V561.5M382.2 559.2V563M383.2 560.6V563.5M384.2 559.4V563.4M385.2 560.4V564.4M386.2 559.6V563.3M387.2 559.5V563.4M388.2 558.3V561.8M389.2 560.1V564.3M390.2 557.1V562.8M391.2 558.6V562M392.2 560.7V564.6M393.2 558.1V562.6M394.2 558.5V562.1M395.2 560.4V564.6M396.2 558.9V562.9M397.2 560.2V563.9M398.2 557.3V562.5M399.2 560V564.1M400.2 560.6V564.6M401.2 560.8V565M402.2 560.8V563.9M403.2 559.5V562.9M404.2 558.6V562.7M405.2 559.6V563M406.2 560.5V565.1M407.2 558.1V561.8M408.2 557V563M409.2 560.6V564.6M410.2 558.4V563.9M411.2 558.2V566M412.2 557.8V561.8M413.2 558.3V562.9M414.2 559.3V563M415.2 559.2V563.8M416.2 559.7V563.5M417.2 560.8V565.1M418.2 558.7V565.6M419.2 559.3V563.6M420.2 558.2V565.5M421.2 558.4V561.9M422.2 559V563M423.2 559.1V562.2M424.2 558.2V562.5M425.2 558.8V565.3M426.2 560.5V564.2M427.2 560.4V564.1M428.2 557.7V562.7M429.2 558.1V564.5M430.2 560.2V563.2M431.2 558.7V563.7M432.2 558.4V562M433.2 560.6V564.2M434.2 560.3V564.1M435.2 559.3V562.5M436.2 559.2V564.7M437.2 558V562.5M438.2 559.2V564.3M439.2 561.2V564.3M440.2 559V562.7M441.2 558.4V561.1M442.2 559.1V564.6M443.2 557.6V561.2M444.2 559V563.5M445.2 559.5V563.8M446.2 559V563M447.2 560.3V563.7M448.2 557.8V562.8M449.2 559.2V562.9M450.2 558.1V562.3M451.2 559.9V563.8M452.2 560.8V564.9M453.2 559V562.5M454.2 559.7V564.1M455.2 560V564.5M456.2 560.1V564.5M457.2 558.8V562.9M458.2 561.2V564.2M459.2 560.1V563.3M460.2 559.9V564M461.2 559V563.5M462.2 557.8V562.6M463.2 558.5V564.3M464.2 559.8V563.7M465.2 559.5V565.8M466.2 557.8V561.4M467.2 559.5V564.1M468.2 558.7V563.2M469.2 557.8V562.9M470.2 558.6V563.8M471.2 558.5V563.8M472.2 560.2V563.8M473.2 560.4V564.5M474.2 559.1V563.6M475.2 558.9V563.4M476.2 560.2V564.3M477.2 557.4V562.2M478.2 560.4V564.5M479.2 559.7V563.2M480.2 559.3V563.6M481.2 560.4V564.8M482.2 558.8V563.7M483.2 560.5V563.8M484.2 557.8V562.2M485.2 561V564.8M486.2 561.7V565M487.2 561.7V564.6M488.2 560.8V564.2M489.2 557.6V563.8M490.2 559.7V564.2M491.2 558.2V564.1M492.2 560.7V564.4M493.2 560.3V565.4M494.2 560.1V565.4M495.2 559.8V564.1M496.2 560.3V563.7M497.2 558.6V567.1M498.2 560.2V563.7M499.2 560.3V564.3M500.2 557.4V561.9M501.2 559.1V562.6M502.2 559.9V563.4M503.2 557.4V561.9M504.2 558.1V563.7M505.2 558V561.9M506.2 557.5V561.6M507.2 559.4V563.4M508.2 559.7V564.1M509.2 560.6V566.4M510.2 561V564.4M511.2 559.5V564.7M512.2 561V565M513.2 557.9V563.3M514.2 556.3V562.1M515.2 556V561.2M516.2 558.8V562M517.2 559.3V563.9M518.2 559.9V563.7M519.2 560.4V563.5M520.2 561.5V564.8M521.2 560V564.3M522.2 558.8V565M523.2 559.7V564.4M524.2 557.9V561.8M525.2 558.8V562.5M526.2 558.6V563.9M527.2 559.5V563.9M528.2 559.9V563.6M529.2 559.7V563.4M530.2 555.9V561.9M531.2 557.4V562.3M532.2 558.4V562.2M533.2 557.1V563.2M534.2 560.2V565.1M535.2 561V564.9M536.2 559.3V562.6M537.2 559.8V563.6M538.2 558.9V562M539.2 560.5V565M540.2 557.1V561.7M541.2 558.5V563.3M542.2 560.3V563.1M543.2 560.5V564.2M544.2 559.8V564.6M545.2 561.3V567.9M546.2 561.3V564.3M547.2 556V561.1M548.2 559.1V565M549.2 560.5V564.5M550.2 561.7V565.2M551.2 560.3V564M552.2 560.8V563.5M553.2 557.7V561.9M554.2 561.2V566.4M555.2 558.5V561.9M556.2 560.2V563.4M557.2 562.3V565.9M558.2 560.9V564.2M559.2 559.3V563.5M560.2 561.3V564.4M561.2 559.7V564.4M562.2 560.9V564.4M563.2 560.8V564.7M564.2 559.6V564.4M565.2 559.4V563.4M566.2 560.4V563.4M567.2 559.3V563.8M568.2 558.4V563.5M569.2 559.1V564.4M570.2 561.1V564.9M571.2 559.6V563.3M572.2 558.9V562.3M573.2 558.1V564.1M574.2 559.3V563.5M575.2 559.4V562.8M576.2 560V565.6M577.2 558.1V562M578.2 557.9V561.6M579.2 560.3V565.1M580.2 559.1V563.5M581.2 561.3V564.3M582.2 561.5V565.7M583.2 560.2V563.8M584.2 560.3V564.8M585.2 560.6V565.8M586.2 559V563.9M587.2 559.9V564.6M588.2 560.7V563.8M589.2 561.2V565M590.2 558.7V562M591.2 560.7V564M592.2 559.8V563.8M593.2 559.7V563.2M594.2 560.4V563.9M595.2 559.8V563.1M596.2 560.8V566.2M597.2 560.2V563.8M598.2 558.6V563.2M599.2 561.1V564.5M600.2 558.5V563.1M601.2 559.6V563.9M602.2 559.9V565.1M603.2 560.6V564.3M604.2 561.1V564M605.2 559.4V563.2M606.2 558.8V562.4M607.2 560.9V564.1M608.2 560.4V564.1M609.2 560V563.3M610.2 559.2V562.9M611.2 560.3V563.7M612.2 560.5V565.9M613.2 558.1V564.2M614.2 559.2V562.9M615.2 558.9V562.8M616.2 559.4V563.1M617.2 558.8V565.4M618.2 560.1V563.8M619.2 561.1V564.8M620.2 558.3V561.7M621.2 558.3V562M622.2 558.3V563.1M623.2 558.9V562.3M624.2 559.8V564M625.2 559.1V563.1M626.2 558.9V564.6M627.2 557.8V563M628.2 560.1V564.9M629.2 560.8V564.5M630.2 557.1V561.5M631.2 558.2V562.4M632.2 561V566M633.2 558.9V564.8M634.2 560.3V564.2M635.2 560.2V565.9M636.2 559.7V563M637.2 558.3V562.8M638.2 560.1V564M639.2 558V566.2M640.2 558V561.4M641.2 559.8V564.5M642.2 558.8V562.4M643.2 560.4V564.5M644.2 558.4V562.6M645.2 559.2V563.3M646.2 561.1V565.8M647.2 558.8V564.1M648.2 560.4V565.1M649.2 559.9V562.6M650.2 558.4V562.5M651.2 561.9V565.3M652.2 560.8V565M653.2 559.8V564.2M654.2 558.9V562.5M655.2 560V563.6M656.2 561.2V564.8M657.2 560.1V564.9M658.2 558.6V562.3M659.2 558.6V562.7M660.2 558.3V562.2M661.2 558.8V562.8M662.2 558.7V562.3M663.2 558.1V562M664.2 560.2V563.5M665.2 557.1V561.8M666.2 561.2V565.3M667.2 560.8V563.9M668.2 559.4V562.4M669.2 559.1V562.2M670.2 560.7V563.9M671.2 559.5V562.7M672.2 558.8V562.1M673.2 557.8V561.6M674.2 558V563.6M675.2 559.3V563.7M676.2 559.8V562.9M677.2 558.5V563.2M678.2 559.5V563.3M679.2 560V564.2M680.2 560.5V564.1M681.2 557.7V564.6M682.2 559.2V563M683.2 558.9V563.4M684.2 558.4V562.7M685.2 559.4V564.9M686.2 560.4V563.4M687.2 558.4V562.6M688.2 559.7V563.5M689.2 557.6V562.2M690.2 559.5V564.2M691.2 558.5V564M692.2 558.4V563.2M693.2 556.8V564.5M694.2 559V563M695.2 558.6V562.3M696.2 560.5V565.9M697.2 557.8V564.5M698.2 559.9V563.7M699.2 559.6V564.8M700.2 560.4V563.6M701.2 561.7V565.8M702.2 558.3V563.9M703.2 560.2V563.5M704.2 561V565.6M705.2 558V564.3M706.2 559.2V563.1M707.2 558.5V564.4M708.2 559.2V563.3M709.2 559.2V564.2M710.2 558.7V563.4M711.2 559.5V563.3M712.2 559.4V563M713.2 558.7V562.7M714.2 562.2V566.6M715.2 561.7V566M716.2 558.8V562.2M717.2 558.3V561.6M718.2 558V564M719.2 556.6V561.1M720.2 557.5V564.6M721.2 557.2V562.8M722.2 560.4V563.4M723.2 559.9V563.5M724.2 558.9V563.7M725.2 558.6V562.7M726.2 562.3V565.5M727.2 559.9V564.6M728.2 559.8V563.6M729.2 557V562.1M730.2 557.8V562.9M731.2 558.4V562.1M732.2 560.4V563.9M733.2 559.7V564.3M734.2 560.4V563.1M735.2 559.9V563.9M736.2 559.1V563.9M737.2 559.1V564.3M738.2 557.4V561.8M739.2 560.8V564.9M740.2 560.2V563.6M741.2 560.5V564.1M742.2 559.9V562.9M743.2 559.1V564.1M744.2 560.9V564.6M745.2 558.9V563.6M746.2 557.9V561.8M747.2 561.8V564.9M748.2 561.1V564.3M749.2 561.1V564.6M750.2 561V564.8M751.2 558.2V564.3M752.2 560.5V565.6M753.2 559.8V563.2M754.2 557.5V561.4M755.2 558.3V564.6M756.2 556V562.6M757.2 557V563.1M758.2 561.3V565.4M759.2 560.2V563.3M760.2 558.3V563.9M761.2 559.5V564.6M762.2 560.2V566.2M763.2 561.3V565.2M764.2 558.9V565.4M765.2 558.2V562.4M766.2 558.9V563.5M767.2 561.5V564.4M768.2 558.9V562.3M769.2 558.9V563M770.2 558.2V564.4M771.2 559.6V564.1M772.2 558.3V562.2M773.2 557.9V561.3M774.2 558.4V562.2M775.2 559.7V563.1M776.2 558.6V563.3M777.2 561.1V566.4M778.2 561.8V566.4M779.2 559.7V563.6M780.2 559.3V562.4M781.2 557.8V562M782.2 559.8V563.8M783.2 560.7V563.4M784.2 560.1V562.9M785.2 561.6V564.7M786.2 558.8V562.9M787.2 559.7V562.4M788.2 560.3V564.6M789.2 559V564.3M790.2 558.2V562.4M791.2 560.3V564.3M792.2 560.5V565.5M793.2 558.1V562.3M794.2 556.9V563.7M795.2 560.6V563.6M796.2 559.2V563.4M797.2 557.9V564.3M798.2 560.5V565.1M799.2 560.7V566.5M800.2 559.2V563.3M801.2 559.6V562.3M802.2 558.5V561.5M803.2 561.8V566.6M804.2 559.9V563.4M805.2 558.8V564.2M806.2 558.7V562.7M807.2 558.3V562.4M808.2 561.2V565.1M809.2 558.9V564.7M810.2 559.1V563.7M811.2 558.1V562M812.2 558.4V562M813.2 560.7V564.2M814.2 560.2V563.8M815.2 556.7V563.1M816.2 560.4V564.4M817.2 560V563.1M818.2 562.3V566.2M819.2 558.8V562.4M820.2 559.6V564M821.2 558.8V564.9M822.2 558.8V563.5M823.2 560.2V563.7M824.2 560.4V564.7M825.2 560V563.2M826.2 558.6V562.6M827.2 558.6V563.1M828.2 558V561.6M829.2 558.8V565.1M830.2 560V562.9M831.2 561V565.2M832.2 559.8V563.1M833.2 557.6V562.8M834.2 559.8V563.5M835.2 561V564M836.2 559.7V562.8M837.2 560.4V566.3M838.2 557.6V563M839.2 559.7V563.3M840.2 558.8V563.5M841.2 560V563.3M842.2 555.5V560.6M843.2 559.7V565M844.2 558.9V561.7M845.2 559.1V565.6M846.2 558.8V562.4M847.2 558.3V563.7M848.2 559.8V564.5M849.2 558.9V563.4M850.2 558.1V564.1M851.2 560V564.4M852.2 558V564.4M853.2 561V566.7M854.2 560V563.6M855.2 560.2V563.2M856.2 559.9V564.3M857.2 555V561.9M858.2 560.1V563.5M859.2 559.6V564.3M860.2 559.6V562.8M861.2 559.6V562.7M862.2 559.8V564.3M863.2 559.9V562.8M864.2 558.8V564.2M865.2 558.9V563.4M866.2 558.4V562.6M867.2 559.7V562.9M868.2 559.6V564.5M869.2 562.1V565.1M870.2 559.5V564.7M871.2 559.1V564.8M872.2 559.4V563.8M873.2 559.6V563.8M874.2 558.7V562.5M875.2 558.5V562M876.2 557.4V562.6M877.2 559.7V565.5M878.2 559.1V562.8M879.2 561.2V564.9M880.2 560V566.4M881.2 559.5V562.7M882.2 561.3V565.1M883.2 559V563.5M884.2 559.1V563.9M885.2 561.8V566.4M886.2 559.6V564.2M887.2 558.5V562.1M888.2 560V564.8M889.2 559.4V563.8M890.2 560.2V562.8M891.2 556.7V559.9" stroke="#f0e432" stroke-width="1.25" fill="none"/>
<path d="M24.5 127.4V134.4M25.5 126.7V133.3M26.5 128.6V134.9M27.5 128.4V134.5M28.5 128.5V134.6M29.5 126.9V134.2M30.5 129.7V135.9M31.5 129.9V137.9M32.5 129.2V136.2M33.5 129.3V134.9M34.5 127.2V134.9M35.5 124.8V135.3M36.5 129.6V136.1M37.5 129.1V135.3M38.5 129.3V135.7M39.5 129.6V139M40.5 129.1V136.5M41.5 127.7V134M42.5 128.9V138.1M43.5 126.6V133M44.5 128V135.8M45.5 128.8V134.9M46.5 127.3V134.6M47.5 128.9V135.5M48.5 129.4V136.4M49.5 128.8V134.9M50.5 129.4V135.9M51.5 128.8V136.4M52.5 127.8V135.3M53.5 128.1V134.7M54.5 125V134.6M55.5 127.9V134.6M56.5 128.2V135.3M57.5 127.3V135.3M58.5 129.1V135.4M59.5 127.7V134.6M60.5 128V136M61.5 128.5V135.8M62.5 127.8V135.1M63.5 129.5V135.3M64.5 128.7V135.7M65.5 128.6V136M66.5 128V137.2M67.5 128.7V135.6M68.5 129.6V136.9M69.5 128.9V136.1M70.5 129.3V136.4M71.5 129.7V135.8M72.5 128.2V134.4M73.5 127.4V135.3M74.5 129.6V135.8M75.5 129.2V135.8M76.5 127.1V134.4M77.5 126.6V134M78.5 127.4V135.3M79.5 128.6V136.1M80.5 128V134.8M81.5 128.4V136.5M82.5 125.5V134.3M83.5 127.1V134.4M84.5 128.8V136M85.5 129.5V135.4M86.5 128.5V134.6M87.5 126.9V133.6M88.5 127.1V133.9M89.5 128.8V134.5M90.5 129.7V136.8M91.5 128.1V135.3M92.5 129.1V135.5M93.5 128.3V134.4M94.5 127.5V134M95.5 127.8V134.6M96.5 129.2V135.8M97.5 128.6V135.6M98.5 127.7V135M99.5 129V135M100.5 129V135.4M101.5 128.6V135.4M102.5 129.6V135.8M103.5 129.2V135.2M104.5 128.7V135.2M105.5 128.1V134.7M106.5 128.1V135M107.5 127.6V134.6M108.5 128.9V134.5M109.5 129.1V134.6M110.5 128V134.4M111.5 128.3V135M112.5 128.3V134.8M113.5 127.3V135.2M114.5 127.6V136.3M115.5 128.8V135.9M116.5 128.9V134.5M117.5 128.7V135.2M118.5 127.5V134.7M119.5 128.7V135.6M120.5 128.3V135.7M121.5 126.7V134.9M122.5 129.1V135.3M123.5 128.5V135M124.5 128.3V135.6M125.5 128.6V135.5M126.5 128.8V135.8M127.5 128.2V135.4M128.5 127.9V134.5M129.5 127.3V134.9M130.5 128.8V134.5M131.5 129.2V135.4M132.5 128.1V135.1M133.5 127.5V135.4M134.5 128.2V134.5M135.5 128V134.3M136.5 128.7V134.7M137.5 127.9V135.4M138.5 128.8V136.2M139.5 127.4V135.4M140.5 127.9V135.5M141.5 127.4V135.5M142.5 126.8V135M143.5 128V134.9M144.5 128.7V136.8M145.5 127.4V134.9M146.5 128.4V135.2M147.5 128.4V134.8M148.5 128.4V135.2M149.5 128.7V134.8M150.5 129V135M151.5 127.5V136.5M152.5 127.6V134.6M153.5 127.8V134.8M154.5 127.6V135.4M155.5 127.6V134.7M156.5 128.5V134.9M157.5 129V135.3M158.5 128.7V134.4M159.5 127.6V135.2M160.5 127.9V134.9M161.5 128.7V134.2M162.5 126.7V134.8M163.5 128V134.9M164.5 128.7V134.8M165.5 128.8V135.9M166.5 129.3V136M167.5 127.3V134.2M168.5 127.2V134.7M169.5 128.4V134.6M170.5 127.4V133.9M171.5 127.9V134.3M172.5 129V135.2M173.5 128V134M174.5 128.3V134.1M175.5 127.6V135.5M176.5 128.9V134.7M177.5 127.8V134.9M178.5 127.9V134.2M179.5 128.6V135.4M180.5 129.1V135.3M181.5 127.9V135.3M182.5 127.8V134.7M183.5 127.2V136.1M184.5 127.5V134.9M185.5 128V134.6M186.5 129V134.9M187.5 128.4V134.5M188.5 128.8V134.7M189.5 129.7V136.1M190.5 129.1V135.8M191.5 128.5V135.8M192.5 128.3V135.8M193.5 126.9V133.8M194.5 128V137.2M195.5 128.6V135.1M196.5 128.8V134.9M197.5 126.6V134.9M198.5 128.5V134.8M199.5 129.4V135.8M200.5 128.8V137.1M201.5 127.9V135.2M202.5 128.2V134.4M203.5 127.4V134.6M204.5 128.8V134.4M205.5 128.4V135.1M206.5 128.7V134.5M207.5 128.7V135.7M208.5 129.7V137.2M209.5 129.6V136.2M210.5 127.9V134.6M211.5 128.2V134.6M212.5 128.4V134.9M213.5 128.8V135M214.5 127.6V133.8M215.5 128.8V136.8M216.5 129V136M217.5 128.1V134.9M218.5 127.7V136M219.5 129.8V135.7M220.5 129V136.5M221.5 129.5V137.5M222.5 127.9V134M223.5 128.3V134.4M224.5 129V135.8M225.5 127.2V134.1M226.5 128.9V134.7M227.5 128.4V135.5M228.5 128.7V135.3M229.5 129.2V136M230.5 128.7V135.3M231.5 129.1V134.9M232.5 127.5V134M233.5 128.1V135.4M234.5 129.2V135.8M235.5 129.8V135.6M236.5 129.7V135.4M237.5 128.5V135.2M238.5 128.8V137.3M239.5 129.7V136.4M240.5 128.3V135.5M241.5 128.1V135.7M242.5 129.4V136.4M243.5 128.6V134.8M244.5 128V134M245.5 128.6V134.5M246.5 128.7V135.6M247.5 129.1V135M248.5 128.7V134.4M249.5 127.7V134.8M250.5 128.9V135.6M251.5 127.8V136.6M252.5 127.8V136.8M253.5 128.6V135.3M254.5 127.4V135.4M255.5 126.3V135.2M256.5 128.8V135.4M257.5 127.1V134.6M258.5 128V136.1M259.5 127.3V134.8M260.5 127.2V134.9M261.5 129.3V135.1M262.5 129V136.1M263.5 127.6V135.1M264.5 129.7V135.4M265.5 128.2V137.9M266.5 129.2V135.4M267.5 127.6V135M268.5 128.1V135.5M269.5 129.9V136.4M270.5 129.6V135.4M271.5 128.3V135.7M272.5 127.6V134.6M273.5 127.6V134.1M274.5 128.2V135.9M275.5 128.1V134.7M276.5 127.8V135M277.5 128.8V135.6M278.5 129.2V135.8M279.5 126.6V134.6M280.5 128.3V136.1M281.5 129.2V135.1M282.5 127.7V135.4M283.5 128.4V136M284.5 128.8V136M285.5 128.4V135.2M286.5 128.8V135.1M287.5 129.1V134.9M288.5 128.6V135.6M289.5 129.6V136.7M290.5 128.9V135.9M291.5 128.5V134.7M292.5 127.7V134.6M293.5 127.7V134.4M294.5 127.2V133.6M295.5 128.7V135.7M296.5 127.1V134.8M297.5 129V134.7M298.5 127.4V135.8M299.5 128.5V134.7M300.5 128.5V134.8M301.5 127.8V134.4M302.5 128.4V135M303.5 126.8V135.1M304.5 127.8V136.7M305.5 128.2V134.5M306.5 127.8V133.3M307.5 125.9V135.5M308.5 128.6V134.5M309.5 130.2V135.9M310.5 129.7V135.2M311.5 129.3V136.8M312.5 128.5V134.5M313.5 129.1V134.6M314.5 128.4V135.2M315.5 126.7V133.8M316.5 128.7V134.3M317.5 128.7V136.1M318.5 128.3V135.3M319.5 128.1V133.7M320.5 129.2V134.7M321.5 129.1V136.2M322.5 128.8V135.4M323.5 127V134.8M324.5 128.5V134.1M325.5 128V134.5M326.5 128V134.2M327.5 128.8V135.6M328.5 128.8V137.2M329.5 128.9V136.4M330.5 127.7V134.9M331.5 128.4V134.7M332.5 128.4V135M333.5 126.1V134.3M334.5 127.3V134.8M335.5 128.1V135.4M336.5 127.9V134.8M337.5 127.8V134.4M338.5 127.4V134.3M339.5 128.4V136.5M340.5 127.7V134.5M341.5 126.9V134.3M342.5 128.5V136M343.5 128.7V136.2M344.5 127.1V134.4M345.5 124.5V133.9M346.5 128.5V134.7M347.5 129.7V136M348.5 129.1V135.7M349.5 129V135.5M350.5 128.4V134.6M351.5 128.9V135.2M352.5 129V135.1M353.5 128.3V134M354.5 129.3V136.1M355.5 128.2V134.4M356.5 129V135.8M357.5 128V134.9M358.5 129.2V135.5M359.5 129.4V135.7M360.5 128.3V134.4M361.5 127.9V135.5M362.5 128.1V134.5M363.5 129.1V134.9M364.5 128.4V134.2M365.5 128.6V134.4M366.5 128.3V134.1M367.5 127.3V135.1M368.5 128.6V136.2M369.5 128V136.5M370.5 127.7V135M371.5 126.9V135.1M372.5 128.6V135.4M373.5 127.8V134.8M374.5 129.7V135.9M375.5 128.7V135.5M376.5 128.6V134.8M377.5 128.6V135.3M378.5 127.6V135.7M379.5 127.6V134.2M380.5 127.7V135.1M381.5 127.4V134.9M382.5 127.4V133.8M383.5 127.1V134.1M384.5 128.9V134.8M385.5 127.4V134.7M386.5 128.1V135M387.5 128.6V134.6M388.5 127.3V134M389.5 128.6V135.4M390.5 128.7V135.4M391.5 128.1V136M392.5 128.1V135.1M393.5 128.5V135.2M394.5 127.9V134.3M395.5 127.9V135.7M396.5 128.5V134.3M397.5 128.6V134.1M398.5 126.3V133.3M399.5 129.3V135.5M400.5 129V136.4M401.5 129V136.4M402.5 127.5V134.5M403.5 127.5V135M404.5 128.8V136.1M405.5 128.4V135.2M406.5 127.5V134.8M407.5 128.7V134.6M408.5 127.4V136.3M409.5 127.4V136.4M410.5 128.7V135.1M411.5 129.7V136.6M412.5 128V135M413.5 128.6V134.4M414.5 127.6V135.7M415.5 127.2V134.8M416.5 128.3V136.9M417.5 128.9V135.4M418.5 127.9V134.4M419.5 128.8V137.4M420.5 128V135.6M421.5 129V135.2M422.5 127.3V134.8M423.5 129V135.5M424.5 127.8V135.5M425.5 128.9V135.1M426.5 128.5V134M427.5 128.2V135.1M428.5 127.2V136.3M429.5 126.8V134.3M430.5 127.3V135.5M431.5 129V135.3M432.5 129.1V136.4M433.5 128.8V135.8M434.5 128.2V135M435.5 128.1V134.9M436.5 130.1V135.9M437.5 128.7V135M438.5 128.9V134.7M439.5 127.6V135.4M440.5 127.4V134.3M441.5 128.7V135.4M442.5 129.1V136.2M443.5 128V134.8M444.5 128.2V134.6M445.5 128.2V135.3M446.5 128.2V135.2M447.5 128.1V134.1M448.5 128V134.1M449.5 128.7V135.2M450.5 127.9V135.4M451.5 128.2V134.3M452.5 128.3V134.2M453.5 129.1V135.4M454.5 129.3V135M455.5 127.6V134.8M456.5 128.3V136.6M457.5 128.5V135.7M458.5 128.1V136.2M459.5 126.8V134M460.5 128.6V135.7M461.5 129.1V136.2M462.5 128V134.5M463.5 128.5V135.8M464.5 128.6V136.6M465.5 127.9V135.5M466.5 127.5V135M467.5 128.9V136.5M468.5 129.4V136M469.5 127.6V134.6M470.5 128.1V134.4M471.5 128.1V134.6M472.5 128.3V135.9M473.5 128.7V135.1M474.5 128.8V135M475.5 128.6V136.5M476.5 127.4V135.3M477.5 129.8V136.6M478.5 128.8V135.1M479.5 127.4V135.2M480.5 129.4V135M481.5 125.6V134.7M482.5 128.8V134.8M483.5 127.4V135.2M484.5 127.2V134.5M485.5 126.8V135.8M486.5 128.4V135.8M487.5 128.6V135.6M488.5 127.9V133.8M489.5 128.4V137.3M490.5 127.9V134.6M491.5 128.2V135.1M492.5 128.5V134.8M493.5 127.2V134.8M494.5 128V134.5M495.5 128.7V136.8M496.5 127.5V134.8M497.5 129.1V136.4M498.5 127.1V135.2M499.5 128V135.2M500.5 128.2V136.2M501.5 128.2V134.7M502.5 127.7V134.6M503.5 128.8V135M504.5 127.2V134.7M505.5 128.6V137.5M506.5 129.3V135.8M507.5 127.6V135.2M508.5 128.8V136.5M509.5 129.7V136.9M510.5 129.4V135.6M511.5 127.9V136.8M512.5 128.4V135.3M513.5 128.1V135.9M514.5 128.7V135.5M515.5 128.5V134.9M516.5 128.1V134.7M517.5 128.3V134.2M518.5 127.7V135.5M519.5 126.8V134.5M520.5 127.9V135M521.5 128.3V135.1M522.5 128.1V135.6M523.5 126.7V133.5M524.5 127.9V134.8M525.5 128.3V135.8M526.5 127.6V136.1M527.5 128.3V135.1M528.5 128V135.6M529.5 129.1V136.1M530.5 128.4V135.8M531.5 127.6V134.6M532.5 128V135.8M533.5 128.9V135.1M534.5 128.4V135M535.5 126.5V133.9M536.5 127.4V134.9M537.5 127.8V136.2M538.5 128.8V134.5M539.5 129V134.9M540.5 127.9V135M541.5 129.3V135.9M542.5 128.3V135.4M543.5 128.7V134.7M544.5 127.4V133.9M545.5 128.3V134.7M546.5 128.5V134.5M547.5 127.8V135.2M548.5 129.2V136.4M549.5 128V134M550.5 127.5V135.8M551.5 128.7V136.5M552.5 128.4V136.4M553.5 129.2V136.3M554.5 128.5V134.6M555.5 128.8V135.9M556.5 126.8V134.8M557.5 129.4V135.3M558.5 128.3V135.4M559.5 126.1V134.7M560.5 128.8V136M561.5 127.3V135.6M562.5 129.4V135.4M563.5 129.5V136M564.5 128.2V135.5M565.5 127.4V135.5M566.5 127.6V134M567.5 127V135.4M568.5 128.9V135.1M569.5 128.7V135.3M570.5 128.5V134.5M571.5 127.2V133.4M572.5 127.9V135.6M573.5 128.8V135.5M574.5 127.5V134.7M575.5 126.9V134.7M576.5 128.4V134.9M577.5 128.4V134.1M578.5 127.9V135M579.5 128.5V135.1M580.5 128.3V134.8M581.5 128V135.9M582.5 129V135.4M583.5 127.8V135.7M584.5 128.5V135.4M585.5 128.3V135.4M586.5 128.9V135.9M587.5 128.7V135.5M588.5 128.7V134.5M589.5 127.5V134.2M590.5 126.4V134.2M591.5 127.7V134.8M592.5 126.8V134.1M593.5 127.4V135M594.5 124.7V135.2M595.5 127.9V135.9M596.5 127.5V135.6M597.5 128.5V135.5M598.5 128.6V134.6M599.5 127.5V134.3M600.5 129.1V137.1M601.5 129.1V134.8M602.5 127.6V135.7M603.5 129.5V135.5M604.5 127.6V135.3M605.5 128.3V134.8M606.5 128.9V136M607.5 128.5V137.2M608.5 128.7V134.9M609.5 127.1V135.9M610.5 125.6V136.1M611.5 128.2V135.3M612.5 128.9V135.2M613.5 127.6V135.3M614.5 127.3V134.7M615.5 128.5V137.4M616.5 129.9V136.7M617.5 128.9V138.2M618.5 128.1V135M619.5 128.3V135.7M620.5 125.9V135.4M621.5 128.7V134.4M622.5 126.5V134.6M623.5 128V133.6M624.5 127.8V134.2M625.5 128.1V134.4M626.5 128.5V134.3M627.5 128.4V135.5M628.5 128.2V136.2M629.5 128.1V134.9M630.5 126.9V135.2M631.5 128V135.1M632.5 128.5V135.8M633.5 127.5V137.1M634.5 129.7V135.6M635.5 128.1V135.1M636.5 128.1V134.6M637.5 126.6V135M638.5 128V133.9M639.5 129.7V137.2M640.5 127.9V135.2M641.5 128.3V134.3M642.5 127.6V134.8M643.5 126.5V136.4M644.5 127V134M645.5 128.9V135.3M646.5 126.5V135.5M647.5 128.4V136.5M648.5 128.8V135.4M649.5 128.2V134.2M650.5 128.4V135.3M651.5 129.1V135.9M652.5 129.3V135.6M653.5 128.4V134.9M654.5 128.1V134.8M655.5 127.5V135M656.5 128.8V136.2M657.5 127.5V135.2M658.5 128.3V134.7M659.5 127.3V136.3M660.5 128.5V134.8M661.5 127.6V133.8M662.5 128.5V134.5M663.5 129.3V135M664.5 128.9V135.6M665.5 127.5V134.7M666.5 127.6V134.3M667.5 128.7V134.7M668.5 128.3V134.1M669.5 128V136.3M670.5 128.6V134.8M671.5 127.9V136M672.5 129.1V135.6M673.5 128.7V135.2M674.5 128.8V135.3M675.5 129.5V135.7M676.5 127.7V134.9M677.5 128.3V134.7M678.5 127.8V135.8M679.5 130V136.9M680.5 128.5V135.4M681.5 128.5V136M682.5 129V136.9M683.5 129.3V134.9M684.5 126.2V133.9M685.5 127.8V135.7M686.5 126.4V134.8M687.5 128.4V135M688.5 129.5V137.9M689.5 128.8V135.5M690.5 128.1V136.2M691.5 127.4V134.9M692.5 128.9V135M693.5 128.9V135.2M694.5 128.9V135.4M695.5 128.9V135.3M696.5 129V135.3M697.5 127.5V135.4M698.5 128.5V135.1M699.5 128.2V135.4M700.5 128.1V135.6M701.5 127.7V136.3M702.5 128.9V135.5M703.5 128V134.9M704.5 128.7V134.7M705.5 128.6V135.6M706.5 127.7V134.8M707.5 128.6V135.1M708.5 129V136M709.5 127.5V136.5M710.5 129.7V135.7M711.5 128V134.6M712.5 128.2V136.1M713.5 127V136.1M714.5 129.6V135.5M715.5 129.2V135.8M716.5 129.6V135.3M717.5 128.5V134.9M718.5 129.7V136M719.5 128.1V134.5M720.5 128.4V137.2M721.5 127.3V135.1M722.5 128.6V135.4M723.5 129.1V137.3M724.5 128.8V138.6M725.5 129.1V135M726.5 128.6V135M727.5 128V136.2M728.5 127.7V134.7M729.5 127.6V136.1M730.5 129V135.3M731.5 127.1V136.7M732.5 128.2V134.9M733.5 128.1V134.3M734.5 128.2V135.4M735.5 128.7V134.8M736.5 129.8V135.9M737.5 128.5V135.6M738.5 129.3V135.7M739.5 128V135.2M740.5 127.7V134.4M741.5 128.3V134.7M742.5 128.8V134.7M743.5 126.6V135.3M744.5 129V136.7M745.5 128.3V134.4M746.5 128.3V134.4M747.5 127.6V133.6M748.5 128.7V135.7M749.5 128.1V134M750.5 128.3V134.4M751.5 128.2V134.7M752.5 128.8V135M753.5 129V135.2M754.5 129.6V135.9M755.5 126.7V134.9M756.5 128V134.6M757.5 127.7V136.3M758.5 127.4V135.1M759.5 128V135.3M760.5 128V134.6M761.5 128.2V135.6M762.5 127.3V136.1M763.5 128.5V135.9M764.5 127.7V135.8M765.5 126.8V134.3M766.5 128.4V134M767.5 128.1V134.6M768.5 126.8V135.8M769.5 128V135.6M770.5 127.6V134.6M771.5 127.7V137.2M772.5 127.2V136.8M773.5 127.7V134.8M774.5 128.7V136M775.5 128.9V135.3M776.5 128.4V134.2M777.5 128.6V135.9M778.5 128.8V135.5M779.5 127.1V135.4M780.5 128.2V134.1M781.5 128.6V135.7M782.5 128.8V135.9M783.5 128.3V135.1M784.5 127.9V134.2M785.5 127.4V134.4M786.5 128.3V135.7M787.5 127.3V136.5M788.5 128.8V136.6M789.5 128.2V135.5M790.5 128.3V134.8M791.5 128V134.9M792.5 128.3V134.7M793.5 128.8V136.9M794.5 128.5V136.1M795.5 129.2V135M796.5 128.6V134.8M797.5 129.4V136.7M798.5 128.6V134.5M799.5 128.5V134.3M800.5 127.9V134.8M801.5 126.2V134.5M802.5 128V135.2M803.5 128.2V134.9M804.5 128.9V136.7M805.5 127.6V135M806.5 129.6V136M807.5 128.6V135.3M808.5 126.4V135.5M809.5 128.2V135M810.5 127.8V134.9M811.5 127.4V134.3M812.5 128.7V135.9M813.5 128.5V135.1M814.5 127.9V136.5M815.5 129.1V134.8M816.5 128.5V136.4M817.5 127.8V135.1M818.5 127.3V134.6M819.5 128.9V135.7M820.5 128.8V136.3M821.5 128.1V134.7M822.5 128.3V133.9M823.5 128.8V136.2M824.5 128.4V135M825.5 126V136.2M826.5 128.8V135.5M827.5 128.1V135.2M828.5 129.4V135.3M829.5 128.2V135.8M830.5 128.7V135.2M831.5 128.2V134.7M832.5 128.7V135M833.5 128.3V136.3M834.5 127.5V135.3M835.5 128.3V135.8M836.5 129.3V136M837.5 128.7V135.3M838.5 128.4V134.8M839.5 129V136.3M840.5 127.5V135.8M841.5 128.2V136.2M842.5 126.9V134.6M843.5 127.8V134.4M844.5 127.4V135.6M845.5 129V135.5M846.5 129.4V135.1M847.5 129.7V136.7M848.5 128.7V135.7M849.5 128.2V136.4M850.5 128V136.5M851.5 126.6V134.2M852.5 128.8V135.2M853.5 128.9V137.4M854.5 129.1V135.9M855.5 129V136.7M856.5 128.4V135.1M857.5 128.8V134.9M858.5 127.3V134.9M859.5 127.5V136.2M860.5 128.7V135.7M861.5 129.4V135.9M862.5 129.9V136.1M863.5 129.1V136.6M864.5 129.4V135.2M865.5 129.1V136M866.5 128.7V135M867.5 125.3V135.1M868.5 126.7V133.3M869.5 127V135.1M870.5 127.8V135.2M871.5 128.1V134.4M872.5 128.3V134.3M873.5 128.7V135.1M874.5 129.9V136.1M875.5 129.1V135.8M876.5 128.5V134.1M877.5 129.3V135.1M878.5 128.6V136.1M879.5 128.4V135.8M880.5 127.5V134.6M881.5 128V134.5M882.5 127.5V136M883.5 129.1V135.6M884.5 129.4V134.9M885.5 128.5V134.9M886.5 128.5V135.4M887.5 128.9V136.5M888.5 129.4V136.2M889.5 129V135.3M890.5 128.1V134.1M891.5 128.9V135.3" stroke="#126068" stroke-width="1.1" fill="none"/>
<path d="M24.5 127.5V134.3M25.5 130.4V134.1M26.5 129.5V134.6M27.5 129.5V134.3M28.5 128V132.6M29.5 130.2V133.5M30.5 127.6V133M31.5 128.1V133.5M32.5 128.1V132.7M33.5 127.6V134.1M34.5 130.5V134.4M35.5 130.6V137.5M36.5 131.2V135.1M37.5 129.3V133.8M38.5 129.3V133.7M39.5 129.3V134.7M40.5 129.6V136.7M41.5 130.5V134.5M42.5 130.8V134.4M43.5 129.2V133M44.5 129.2V133.5M45.5 129.9V134.7M46.5 132.2V136.2M47.5 129.9V134.4M48.5 131.5V134.5M49.5 130.3V134.1M50.5 130.7V134.9M51.5 129.5V133.7M52.5 129.5V133.6M53.5 128.9V132.3M54.5 130.6V135.8M55.5 128.2V133.7M56.5 128.2V133.9M57.5 131.9V135.8M58.5 131.5V137.8M59.5 129.9V135.5M60.5 130.6V134.5M61.5 128.8V132.1M62.5 131.2V134.7M63.5 129.8V134M64.5 130.1V133.4M65.5 129.4V133.4M66.5 127.5V131.5M67.5 129V133.9M68.5 129.1V133.5M69.5 129.9V134.6M70.5 128.3V132.6M71.5 129.9V133M72.5 129.8V133.1M73.5 130.3V134.4M74.5 128.5V131.9M75.5 125.4V134.2M76.5 128.2V132.7M77.5 128.6V133.6M78.5 129.2V132.8M79.5 126.5V133.8M80.5 130.5V136.7M81.5 130.7V134.1M82.5 132.2V136.1M83.5 130.7V134.3M84.5 128.7V132.8M85.5 128.9V132.6M86.5 127V131.2M87.5 127.2V132.1M88.5 129.7V134.4M89.5 127.3V132.6M90.5 129.4V135.7M91.5 128.4V134.4M92.5 130.9V136.9M93.5 129.3V133M94.5 127.3V132.3M95.5 127.5V132.4M96.5 130.4V134.2M97.5 129.4V133.4M98.5 130.5V134.1M99.5 131.2V134.6M100.5 129.8V133.9M101.5 127.7V133M102.5 129.6V132.7M103.5 130.4V135.6M104.5 128.9V135M105.5 127.3V134M106.5 128.9V133M107.5 128.7V133.4M108.5 129.2V134M109.5 129.6V132.7M110.5 130.1V133.7M111.5 129.3V132.3M112.5 130.2V133.4M113.5 126.4V132.8M114.5 129.9V133.8M115.5 128.1V133.8M116.5 128.4V132.2M117.5 130.6V135.8M118.5 131.1V134.8M119.5 130.4V134M120.5 128.5V132.9M121.5 129.7V133.8M122.5 129.1V134.2M123.5 129V133M124.5 130V134M125.5 130.4V134.7M126.5 130.7V134.8M127.5 130.2V133.9M128.5 130.4V133.5M129.5 130.4V134.7M130.5 130.1V134.4M131.5 130.6V135M132.5 129.5V133.9M133.5 129V132.4M134.5 128.6V132.3M135.5 132.2V136.1M136.5 129.4V133.4M137.5 129V133.4M138.5 128.8V132.7M139.5 129V133.2M140.5 131.3V134.8M141.5 130.1V134.5M142.5 128.6V134M143.5 129.5V133.3M144.5 131.1V134.8M145.5 129V135.3M146.5 128.9V133M147.5 129.5V132.7M148.5 129V132.8M149.5 130.8V134.3M150.5 129.7V133.6M151.5 129.9V133M152.5 130.5V134M153.5 128.1V132.5M154.5 128V132.6M155.5 127.9V132.5M156.5 129.7V134.1M157.5 130V133.8M158.5 131V135.4M159.5 128.5V133.6M160.5 129.4V133.2M161.5 128.2V132.1M162.5 129.7V135.5M163.5 128.2V132.5M164.5 130.9V135.5M165.5 132.5V136M166.5 130.9V135.7M167.5 127.5V134.3M168.5 129.1V134.1M169.5 130.4V134M170.5 128.6V132.3M171.5 129V133.4M172.5 129.9V133.8M173.5 131.7V135.8M174.5 131.2V135.1M175.5 130.4V134.3M176.5 126.3V132M177.5 131.8V135M178.5 128.4V132.4M179.5 129.8V136.1M180.5 130.3V135.1M181.5 130.3V134.4M182.5 131.6V136M183.5 126.2V132.1M184.5 127.8V133M185.5 130.6V134.4M186.5 129.8V132.8M187.5 131.2V135.1M188.5 127V132.5M189.5 131.4V135.3M190.5 130.3V137.2M191.5 131.2V134.3M192.5 128.4V133.5M193.5 129.1V133.9M194.5 130.4V134.1M195.5 129.4V135.5M196.5 131.3V135.8M197.5 129.2V135.2M198.5 132.2V138.6M199.5 130.5V133.4M200.5 130.6V134.6M201.5 131.2V134.7M202.5 129.2V133M203.5 129.7V132.8M204.5 128.9V132.7M205.5 129.9V133.4M206.5 130.2V134.9M207.5 129V133.1M208.5 130.3V134.8M209.5 130.2V134M210.5 128.2V132M211.5 131.3V134.9M212.5 130.2V134.2M213.5 127.6V132.2M214.5 131V137M215.5 127.8V133.2M216.5 130.3V133.7M217.5 130.9V136.4M218.5 129.9V135M219.5 128.9V132M220.5 128.4V132.7M221.5 127.1V132.5M222.5 126.1V133M223.5 129.2V132.7M224.5 130.9V134.4M225.5 131.3V134.3M226.5 130V135M227.5 129V132.7M228.5 128.5V132.9M229.5 128.8V133.8M230.5 128.3V132.7M231.5 127.7V132.5M232.5 129.3V135.6M233.5 129.8V133.8M234.5 129V134.2M235.5 130.3V133.7M236.5 130.3V136.6M237.5 129.9V133M238.5 129.6V133.4M239.5 129V133.3M240.5 129.2V134.7M241.5 128.6V132.6M242.5 129.4V134M243.5 129.9V134.1M244.5 128.4V131.9M245.5 130.3V134.9M246.5 126.2V130.5M247.5 129.4V135.6M248.5 130.4V134.1M249.5 125.9V132.4M250.5 128.1V132.7M251.5 127.8V132.1M252.5 127.9V131.8M253.5 127.1V131.3M254.5 126.5V131.2M255.5 129.6V135.4M256.5 131.4V134.4M257.5 129.4V134.1M258.5 128.9V132.3M259.5 130.1V133.5M260.5 129.1V135.4M261.5 128.3V132.2M262.5 128.6V133.5M263.5 129V133.1M264.5 131.9V135.1M265.5 129.7V134.4M266.5 128.4V133.1M267.5 128.6V134.4M268.5 130.6V135.1M269.5 129.7V134.5M270.5 127.8V132.9M271.5 129.8V132.8M272.5 129.6V134.7M273.5 128V133.6M274.5 130.8V134M275.5 130.2V135.9M276.5 128.4V133.7M277.5 129.2V133.6M278.5 127.8V133.8M279.5 130.4V133.9M280.5 130.6V135.3M281.5 126.9V132.4M282.5 129.5V133.1M283.5 129.3V133.2M284.5 128V132.8M285.5 129.9V133.4M286.5 129.5V134.7M287.5 130.9V134.1M288.5 129.9V133.3M289.5 130.3V134.6M290.5 130.1V134.8M291.5 130.6V134.5M292.5 131.1V134M293.5 128.1V133.9M294.5 129.5V133.3M295.5 127.3V133.7M296.5 129.6V133.8M297.5 132.7V136.2M298.5 129V134.6M299.5 130.1V136.8M300.5 129.4V133.5M301.5 131.1V134.6M302.5 129V133.8M303.5 130V134.2M304.5 129.5V133.6M305.5 130.1V133.7M306.5 128.6V132.5M307.5 129V135.3M308.5 128.3V133.4M309.5 131.8V136.5M310.5 129V135M311.5 129.9V132.9M312.5 129.8V135.5M313.5 129.5V134.9M314.5 129.9V134.4M315.5 127.3V132.3M316.5 129.1V133.4M317.5 129.1V133.5M318.5 129.5V133.9M319.5 130.5V134.7M320.5 128.1V131.8M321.5 128.2V132.7M322.5 130.7V135.5M323.5 130.2V133.9M324.5 130.6V134.4M325.5 127.3V132.6M326.5 129.5V133.5M327.5 129.9V133.3M328.5 129.1V134.7M329.5 130V133.9M330.5 127.1V133.2M331.5 129.2V134.1M332.5 129.3V133.5M333.5 130.3V134.1M334.5 130.5V134.6M335.5 131V136.5M336.5 129.2V133.4M337.5 129.3V133M338.5 130.9V134.7M339.5 129.6V135.8M340.5 129.5V134.7M341.5 130.5V133.9M342.5 129.4V133.6M343.5 129.2V133.1M344.5 128.8V134.8M345.5 131.9V136.5M346.5 129.8V133.7M347.5 128.3V133.6M348.5 127.2V133.8M349.5 130.1V134.9M350.5 128.9V133.1M351.5 130.2V134.6M352.5 130V133.8M353.5 128.9V133.7M354.5 130V135.7M355.5 127.5V132.1M356.5 127.3V132.6M357.5 130.8V134M358.5 130.4V134.4M359.5 130.2V134.6M360.5 128.1V133.6M361.5 127.4V133.4M362.5 131.5V136M363.5 128.1V133.3M364.5 131.3V134.4M365.5 128.5V136.3M366.5 130.2V133.6M367.5 131.6V135.1M368.5 130.2V134.2M369.5 131V134.8M370.5 130.8V134.2M371.5 130.2V135M372.5 127.9V133.8M373.5 130.6V134.8M374.5 130.7V134.2M375.5 129.2V134.3M376.5 129.3V134.6M377.5 131.3V134.9M378.5 130.8V133.9M379.5 129.9V134.4M380.5 127.2V131.7M381.5 129.3V134.6M382.5 130.9V135.9M383.5 130.2V137.8M384.5 128.5V133.9M385.5 129V132.3M386.5 131V134.7M387.5 131.7V135.8M388.5 129.8V133.9M389.5 129.5V135M390.5 131.6V135.2M391.5 128.5V132.8M392.5 130.4V134.5M393.5 130.2V133.7M394.5 129V134.4M395.5 129.6V133.8M396.5 129.7V134.1M397.5 128.6V132.6M398.5 129.3V133.6M399.5 130.6V134.1M400.5 131.1V135.1M401.5 126.2V132.5M402.5 127.2V132M403.5 129.8V134.3M404.5 130.2V135.3M405.5 128.7V133.1M406.5 128V133.1M407.5 129.7V133M408.5 129.4V133.1M409.5 129.6V133.3M410.5 129.1V133.4M411.5 131.3V135.5M412.5 127.5V132.2M413.5 128.8V134.5M414.5 131.3V134.6M415.5 130.2V135.6M416.5 130.5V135.3M417.5 127.8V132M418.5 128.9V134M419.5 127.8V133.9M420.5 129.3V135.5M421.5 131V136.1M422.5 130.9V134.7M423.5 125.2V130.9M424.5 129.7V134M425.5 129.6V134.1M426.5 130.3V135M427.5 132V137.1M428.5 129.8V133.4M429.5 128.8V133.6M430.5 130.4V134.3M431.5 128.7V132.5M432.5 129.8V134.2M433.5 129.3V132.8M434.5 129.1V133.8M435.5 129.1V133.5M436.5 130.7V135.5M437.5 128.9V134.2M438.5 128.1V133.1M439.5 130.2V134.8M440.5 130.3V134.4M441.5 128.7V132.8M442.5 130.3V135.9M443.5 131V134.7M444.5 129.4V133.2M445.5 129.9V136.8M446.5 127.2V134.1M447.5 128.9V133.9M448.5 130.1V133.3M449.5 130V135.1M450.5 128.8V133.2M451.5 130.4V135.6M452.5 130.9V135.1M453.5 129.1V134.1M454.5 129.6V135.4M455.5 130V135.1M456.5 130.4V133.7M457.5 128.2V132.2M458.5 129V134.3M459.5 129.4V134M460.5 128.9V133.9M461.5 130.6V135M462.5 129.8V134.4M463.5 129.5V134.4M464.5 128.5V133.1M465.5 130.5V137.1M466.5 129.8V133.7M467.5 127.9V133.6M468.5 128.6V134.1M469.5 128.8V133.2M470.5 129.6V134.7M471.5 130.5V133.9M472.5 130.4V135.3M473.5 129.4V132.6M474.5 129.5V134.3M475.5 130.6V134.6M476.5 130.9V134.5M477.5 129.7V134.2M478.5 129.3V132.8M479.5 129.1V135.2M480.5 129.2V133.2M481.5 131.4V135.8M482.5 132.2V136M483.5 129V133.4M484.5 128.8V133.7M485.5 129.8V134.2M486.5 128.5V133.6M487.5 129.9V133.2M488.5 127.7V134.4M489.5 130.1V133.8M490.5 128.8V133.6M491.5 129.2V133.1M492.5 130.6V135.1M493.5 128.7V134M494.5 129.7V135.3M495.5 130V134.6M496.5 130.5V135.3M497.5 128V132.9M498.5 130.7V135.2M499.5 129.3V133.1M500.5 130.1V134.4M501.5 131.2V135.1M502.5 130.6V135.8M503.5 129.3V134.5M504.5 129.2V133.7M505.5 130.5V134M506.5 128.5V136.1M507.5 128.6V133M508.5 127.6V131.1M509.5 128.5V134M510.5 128V132.8M511.5 130.5V134.2M512.5 129.4V133.9M513.5 129.3V133.2M514.5 128.7V132.1M515.5 129.4V133.6M516.5 129.5V135M517.5 128V134M518.5 128.4V132.8M519.5 130V133.6M520.5 128.3V133.6M521.5 129.5V134M522.5 127.3V133.8M523.5 130.3V134.4M524.5 126.6V131.6M525.5 128.8V134.7M526.5 130.1V133.4M527.5 129.8V133M528.5 129.3V132.7M529.5 129.6V135.4M530.5 128.4V134M531.5 128V132.2M532.5 129.2V133M533.5 129.3V133.6M534.5 130.9V134.2M535.5 129.7V134.1M536.5 128.3V131.7M537.5 129.1V132.8M538.5 129.8V134.4M539.5 130.1V134.5M540.5 128.2V133.4M541.5 130V133M542.5 128.7V133.6M543.5 129.4V136.3M544.5 127.8V132.6M545.5 130.5V133.3M546.5 131.5V135.9M547.5 132V135.2M548.5 129.1V135.5M549.5 130.3V133.7M550.5 129.5V135.7M551.5 129.8V134.2M552.5 130.5V134.4M553.5 130.5V133.7M554.5 129.5V133M555.5 127.2V132.5M556.5 129.6V133.5M557.5 128.6V133M558.5 127.6V134.7M559.5 130.2V135M560.5 129.4V132.6M561.5 125.9V131.5M562.5 130.9V134.1M563.5 130V135.4M564.5 128V132.4M565.5 129.6V133.2M566.5 128.9V133.2M567.5 129.4V133.7M568.5 130.7V134.1M569.5 130.8V135.4M570.5 127.7V133.1M571.5 130.6V135.4M572.5 129.2V134.4M573.5 130.1V135.3M574.5 129.9V133.4M575.5 128.6V133.8M576.5 130.7V135.1M577.5 128.7V133.5M578.5 130.3V134.6M579.5 129.1V133.7M580.5 130.9V136M581.5 128.9V131.9M582.5 130.8V135M583.5 132V135.5M584.5 130.5V134.7M585.5 126.7V134.4M586.5 127.5V134.4M587.5 130.3V133.9M588.5 130.9V134.5M589.5 130.5V135.2M590.5 130.5V133.9M591.5 131V135.3M592.5 129.6V134.2M593.5 129.5V135.7M594.5 130.1V133.1M595.5 131.3V135.2M596.5 128.2V133.5M597.5 129.6V137.1M598.5 128.1V132.6M599.5 128.9V133.6M600.5 129.3V133.6M601.5 128.3V133.1M602.5 129.4V133.2M603.5 128.9V132.4M604.5 128.6V132.4M605.5 128.9V133.4M606.5 129.5V134M607.5 128.9V135M608.5 128.9V134.3M609.5 129.9V134.4M610.5 129.8V133.4M611.5 130V133.4M612.5 130.5V133.9M613.5 129V132.5M614.5 129.9V135.8M615.5 128.2V132.8M616.5 127.8V132.2M617.5 130.3V134.6M618.5 129.4V133.7M619.5 126V130.5M620.5 129.5V133.7M621.5 130.7V133.8M622.5 129.2V132.9M623.5 129.1V136.2M624.5 127.7V131.9M625.5 129.6V134.3M626.5 129.7V134.6M627.5 129.2V132.5M628.5 129.5V133.9M629.5 128V133.4M630.5 129.2V133.1M631.5 128.5V132.2M632.5 131.1V136.2M633.5 129.4V133.1M634.5 128.3V133M635.5 130.4V134.1M636.5 130.2V133.8M637.5 128.8V134.1M638.5 130V132.9M639.5 128.8V135.7M640.5 128.2V133M641.5 128.6V132.3M642.5 130.6V135.5M643.5 127.6V134.8M644.5 129.8V133.9M645.5 129.3V133.2M646.5 128.7V134.1M647.5 129.9V134.7M648.5 128.9V134.4M649.5 129.8V135.9M650.5 128.4V133M651.5 129.1V134.3M652.5 127.7V134.8M653.5 128.9V134.3M654.5 130.7V134.8M655.5 126.9V132.8M656.5 127.3V130.9M657.5 129.9V133.6M658.5 131.5V135.9M659.5 130.3V135.7M660.5 131.1V134.3M661.5 131.1V134.5M662.5 129.7V133.9M663.5 131.3V136.3M664.5 126.8V136.7M665.5 131.6V136.3M666.5 130.2V134.9M667.5 129.2V133M668.5 127.9V133.9M669.5 129.5V134.2M670.5 129.5V133.8M671.5 131.2V136M672.5 129.5V134.1M673.5 128V133.5M674.5 129V133.9M675.5 128.7V134.6M676.5 129.4V133.3M677.5 129.9V135.4M678.5 128.9V132.4M679.5 129.4V133.6M680.5 128.2V133.2M681.5 128.8V133.1M682.5 129.3V135.7M683.5 131V135.5M684.5 130.4V134.9M685.5 129V134.6M686.5 131.7V135.3M687.5 130.7V135.6M688.5 131.2V134.6M689.5 130.4V134.7M690.5 130.5V134.9M691.5 128.5V133.9M692.5 131.8V134.9M693.5 129.5V134.8M694.5 129.1V134.3M695.5 129V133.4M696.5 129.2V135.2M697.5 129.2V133.2M698.5 129.2V134.1M699.5 130.1V133.9M700.5 130.4V134.3M701.5 128.7V132.4M702.5 129.1V132.7M703.5 128.1V132.2M704.5 129.2V134.2M705.5 130.5V133.9M706.5 128.1V131.9M707.5 128.2V132.2M708.5 129.5V133.8M709.5 129.5V133.5M710.5 128.5V131.7M711.5 129.7V133.6M712.5 126.2V131.6M713.5 129.4V133.2M714.5 128.7V133.2M715.5 129.9V136.1M716.5 128.8V133.7M717.5 128V131.3M718.5 131.6V135.2M719.5 128.7V133.6M720.5 130.8V134.5M721.5 129.2V133.1M722.5 128.7V134.1M723.5 129.3V135.4M724.5 129.6V134.8M725.5 129.7V133.4M726.5 129.2V134M727.5 130.3V135M728.5 131.3V135.3M729.5 127.4V133.2M730.5 129.1V133.2M731.5 129V133M732.5 131.3V136.6M733.5 129.5V133.9M734.5 130V134.1M735.5 130.1V135.4M736.5 129.7V133.6M737.5 128.1V133.9M738.5 129.5V133.9M739.5 129.4V134.6M740.5 129.3V133.7M741.5 130.4V133.8M742.5 128.8V132.2M743.5 130.4V133.7M744.5 127.2V131.3M745.5 129.5V132.9M746.5 129.4V134.7M747.5 129.6V133.1M748.5 129.3V133.6M749.5 128.2V132M750.5 129.5V134.5M751.5 130.6V134.4M752.5 130.5V133.7M753.5 130V135.5M754.5 127.2V134.7M755.5 130.4V136.5M756.5 129.8V133M757.5 130.1V133.3M758.5 129.6V134.1M759.5 129.3V133.5M760.5 128.6V133.5M761.5 129.5V136.4M762.5 131.8V137M763.5 129.9V133M764.5 128.6V134.4M765.5 129.1V134.8M766.5 128.9V133.3M767.5 127.8V133.6M768.5 129.6V134.2M769.5 130.1V134.5M770.5 130V134.7M771.5 127.6V134.3M772.5 129.2V136.2M773.5 129.2V134.4M774.5 130.1V134.1M775.5 130.2V133.3M776.5 127.9V132.8M777.5 129.7V133.3M778.5 128V134.6M779.5 131.7V135.7M780.5 130.3V133.7M781.5 129.9V133.7M782.5 130.8V137.3M783.5 130.1V137.2M784.5 130.1V134.9M785.5 129V134M786.5 129.7V133.6M787.5 130V133.6M788.5 130.3V133.4M789.5 129.1V133.7M790.5 127.6V133M791.5 131.4V134.5M792.5 129.3V133M793.5 131.4V134.9M794.5 130.3V135.8M795.5 130.1V134.9M796.5 128.7V132.6M797.5 128.3V132.6M798.5 126.8V133M799.5 131.3V135.3M800.5 130.5V134.5M801.5 129.8V133.9M802.5 131.6V135.8M803.5 129.7V134.1M804.5 130.4V133.7M805.5 131.3V134.6M806.5 131V135.1M807.5 130.8V135M808.5 129V134M809.5 129V136M810.5 127.6V131.9M811.5 127.2V132.3M812.5 129.1V134.6M813.5 130.5V134.8M814.5 130V134.2M815.5 130V134.6M816.5 128.9V135.7M817.5 128.2V132.6M818.5 132V136.7M819.5 130.3V134.2M820.5 129.8V134.4M821.5 129.8V133.9M822.5 130.2V134.5M823.5 130.9V134.8M824.5 128.7V134.4M825.5 128.1V133.1M826.5 129.9V133.6M827.5 130.7V134.1M828.5 131.7V137.3M829.5 128.8V132.7M830.5 131.2V134.6M831.5 128.4V133.4M832.5 128.8V134.3M833.5 129.6V133.2M834.5 130V133.1M835.5 128V133.6M836.5 129.5V134.4M837.5 127.6V132.5M838.5 130.2V133.5M839.5 129.3V132.8M840.5 128.6V133.5M841.5 129.1V134.1M842.5 129V134.4M843.5 129V132.5M844.5 128.3V132.3M845.5 129.6V136.8M846.5 127.1V132.7M847.5 129.9V134.2M848.5 130.9V134.9M849.5 131.7V135.7M850.5 128.1V131.6M851.5 129.1V133.4M852.5 128.4V132.8M853.5 129.9V133.1M854.5 128.9V132.9M855.5 129.3V133.7M856.5 128.6V134.9M857.5 130V134.3M858.5 130.3V134.3M859.5 128.8V132.9M860.5 128.4V132.6M861.5 128.4V132.8M862.5 127.6V136.6M863.5 128.6V133.1M864.5 131.2V136.6M865.5 130.4V134.5M866.5 128.7V132.2M867.5 130.9V135M868.5 130V133.3M869.5 131.9V135.6M870.5 128.7V133M871.5 129.6V135.6M872.5 131.1V134.4M873.5 129.6V133.4M874.5 130.5V134.5M875.5 126.9V132.9M876.5 131.6V134.7M877.5 129.2V135M878.5 127.2V132.8M879.5 129.3V134M880.5 129.3V133M881.5 128.5V132.6M882.5 126.8V132M883.5 129.3V135M884.5 128.4V134.2M885.5 127.6V132.9M886.5 126.6V131.6M887.5 128.7V132.8M888.5 128.9V133.3M889.5 129.8V134.5M890.5 129.4V132.9M891.5 128.2V132.1" stroke="#24d2d2" stroke-width="1.25" fill="none"/>
<!-- record bar -->
<path d="M252 6.500H250.500V18.500H252M665.500 6.500H667V18.500H665.500" stroke="#c8c8c8" stroke-width="1" fill="none"/>
<path d="M251.500 12H666.500" stroke="#2b7250" stroke-width="2.600" fill="none"/>
<!-- bar T marker -->
<rect x="332.500" y="8.500" width="8" height="11" rx="2" fill="#f0a624"/>
<path d="M334.500 11h4M336.500 11v7" stroke="#2a1a08" stroke-width="1.600" fill="none"/>
<!-- trigger position triangles -->
<path d="M454.500 5h7.500l-3.750 4.500z" fill="#f0a030"/>
<path d="M452.500 19.500h11.500l-5.750 6z" fill="#f0a030"/>
<!-- T marker in plot -->
<path d="M199.500 25.500h11v10l-5.500 4l-5.500-4z" fill="#f0aa22"/>
<path d="M201.500 28.500h7M205 28.500v8" stroke="#2a1606" stroke-width="2" fill="none"/>
<!-- channel markers -->
<path d="M5 123.200h13l5 7l-5 7H5z" fill="#e8dc30" stroke="#202028" stroke-width="1"/>
<path d="M5 126h12l5.500 7.300l-5.500 7.300H5z" fill="#3fd0de" stroke="#102030" stroke-width="1"/>
<text x="12" y="138.200" font-family="Liberation Sans, sans-serif" font-weight="bold" font-size="13" fill="#102030" text-anchor="middle">2</text>
<!-- trigger level arrow -->
<path d="M883 359.400l7-4.800v4h3.200v1.600h-3.200v4z" fill="#f0e524"/>
<!-- time box icons -->
<rect x="517" y="606.500" width="10" height="10.500" rx="1.500" fill="#f0a628"/>
<path d="M518.800 609.200h6.400M522 609v7" stroke="#1a1208" stroke-width="2" fill="none"/>
<path d="M527.500 611.700h5" stroke="#f0a628" stroke-width="1.800" fill="none"/><path d="M531.500 608.300l4.300 3.400l-4.300 3.400z" fill="#f0a628"/>
<path d="M536.500 608h10.500l-5.250 5.500z" fill="#f0a628"/>
<!-- falling edge icon -->
<path d="M811 593.500h4.500l3 8h4.500" stroke="#f0f0f0" stroke-width="1.800" fill="none"/>
</svg>
</body></html>
